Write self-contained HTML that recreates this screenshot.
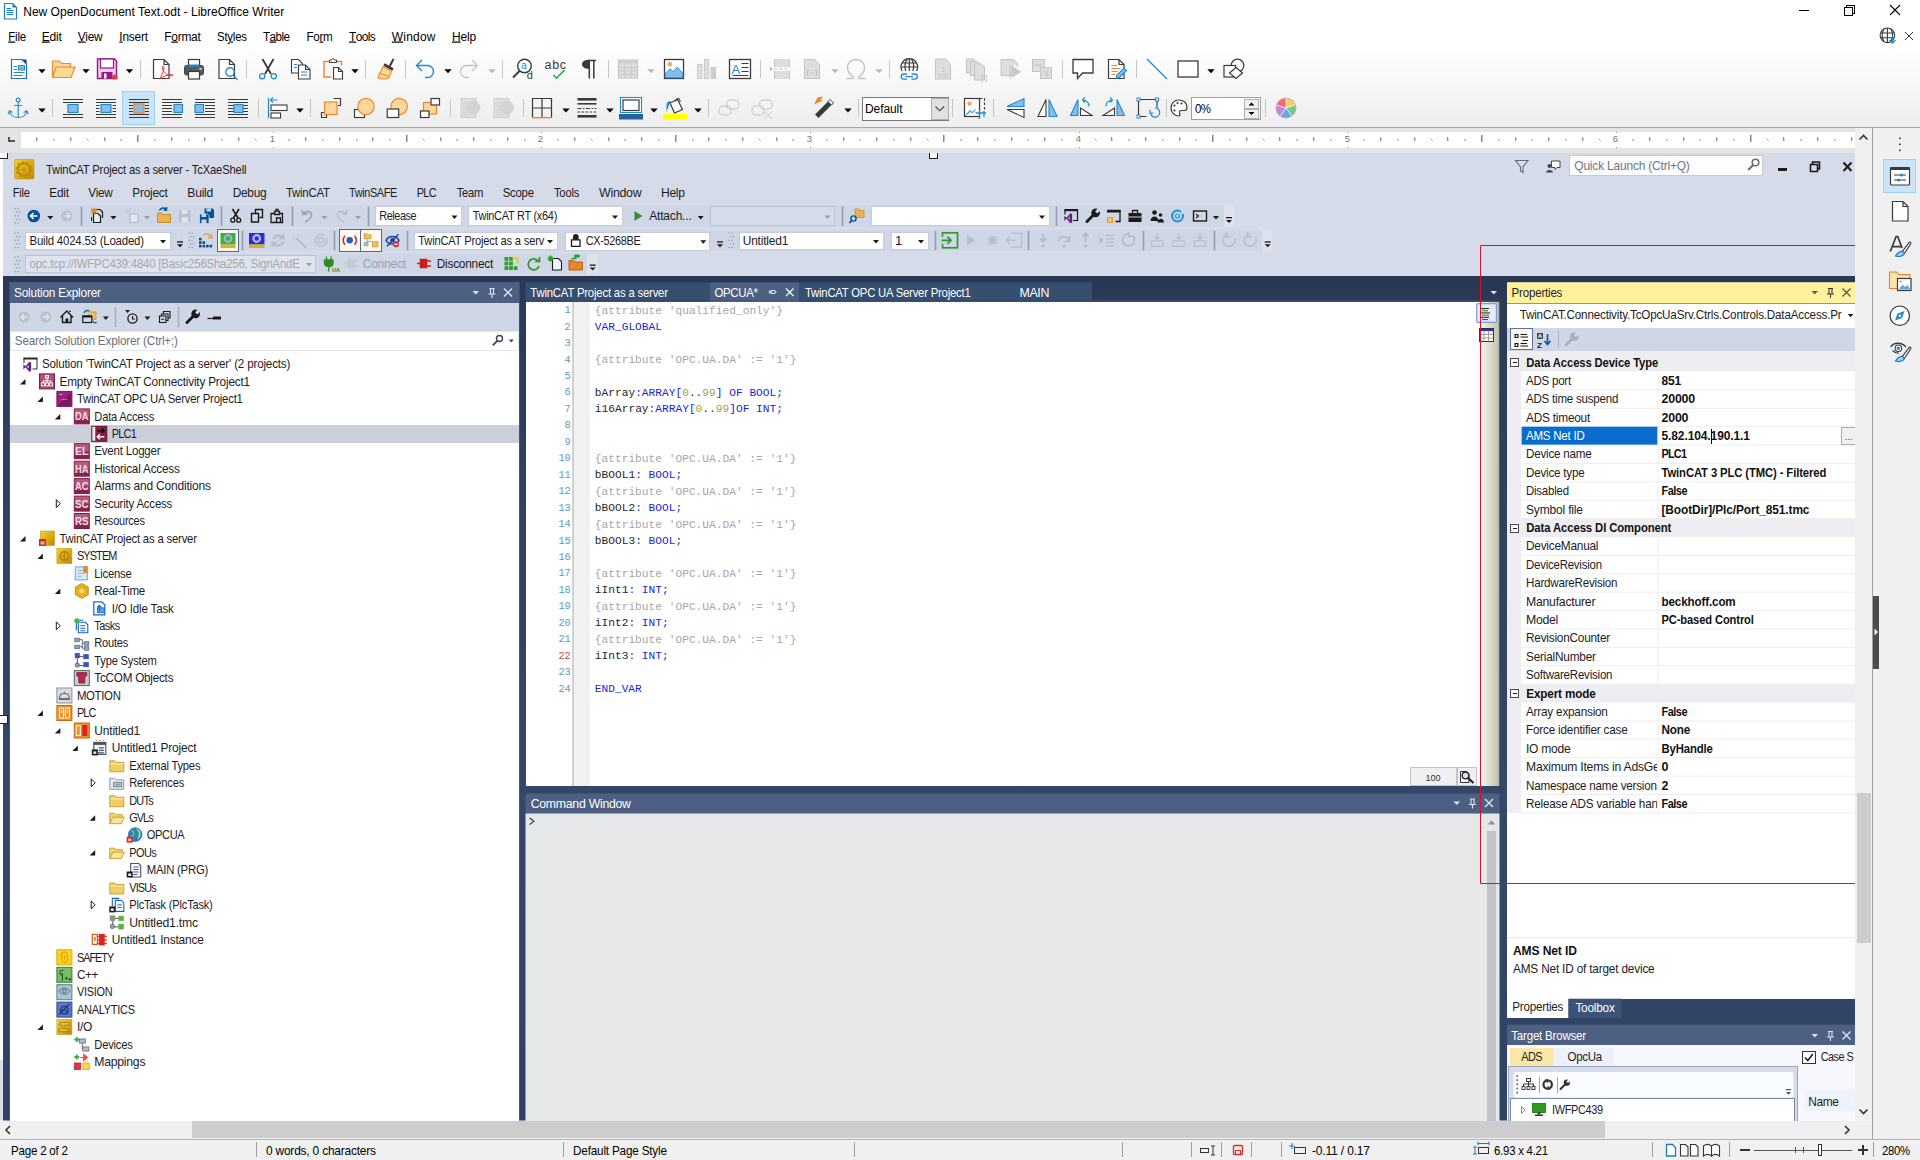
<!DOCTYPE html>
<html><head><meta charset="utf-8"><title>New OpenDocument Text.odt - LibreOffice Writer</title>
<style>html,body{margin:0;padding:0;background:#fff;overflow:hidden}body{width:1920px;height:1160px;font-family:"Liberation Sans",sans-serif}svg{display:block;font-family:"Liberation Sans",sans-serif}text{white-space:pre}.m{font-family:"Liberation Mono",monospace}</style></head>
<body>
<svg width="1920" height="1160" viewBox="0 0 1920 1160">
<rect x="0" y="0" width="1920" height="1160" fill="#ffffff" shape-rendering="crispEdges"/>
<defs><linearGradient id="tbg" x1="0" y1="0" x2="0" y2="1"><stop offset="0" stop-color="#ffffff"/><stop offset="0.2" stop-color="#ffffff"/><stop offset="1" stop-color="#eeeeee"/></linearGradient><linearGradient id="olive" x1="0" y1="0" x2="1" y2="0"><stop offset="0" stop-color="#ffffff"/><stop offset="0.35" stop-color="#e9eadf"/><stop offset="0.9" stop-color="#c6c9b2"/><stop offset="1" stop-color="#a9ad98"/></linearGradient></defs>
<rect x="0" y="24" width="1920" height="103" fill="url(#tbg)" shape-rendering="crispEdges"/>
<rect x="0" y="127" width="1920" height="1" fill="#a9a9a9" shape-rendering="crispEdges"/>
<rect x="0" y="128" width="1872" height="25" fill="#e4e4e4" shape-rendering="crispEdges"/>
<rect x="21" y="132" width="1841" height="16" fill="#ffffff" shape-rendering="crispEdges"/>
<rect x="0" y="153" width="1855" height="968" fill="#ffffff" shape-rendering="crispEdges"/>
<rect x="3" y="153" width="1852" height="968" fill="#d6dbe9" shape-rendering="crispEdges"/>
<rect x="0" y="1060" width="3" height="60" fill="#d9deea" shape-rendering="crispEdges"/>
<defs><linearGradient id="navy" gradientUnits="userSpaceOnUse" x1="0" y1="276" x2="0" y2="1120"><stop offset="0" stop-color="#293955"/><stop offset="0.28" stop-color="#304262"/><stop offset="0.62" stop-color="#344769"/><stop offset="1" stop-color="#314365"/></linearGradient></defs>
<rect x="3" y="276" width="1852" height="845" fill="url(#navy)" shape-rendering="crispEdges"/>
<path d="M4.5 3.5h8l4 4v11.5h-12z" fill="#ffffff" stroke="#1e7cc4" stroke-width="1.2" />
<path d="M12.5 3.5l4 4h-4z" fill="#1e7cc4" />
<line x1="6.5" y1="8.5" x2="11" y2="8.5" stroke="#1e7cc4" stroke-width="1" />
<line x1="6.5" y1="10.5" x2="13.5" y2="10.5" stroke="#1e7cc4" stroke-width="1" />
<line x1="6.5" y1="12.5" x2="13.5" y2="12.5" stroke="#1e7cc4" stroke-width="1" />
<line x1="6.5" y1="14.5" x2="13.5" y2="14.5" stroke="#1e7cc4" stroke-width="1" />
<text x="23.2" y="15.5" font-size="12" fill="#000" textLength="261" lengthAdjust="spacing">New OpenDocument Text.odt - LibreOffice Writer</text>
<line x1="1799" y1="10.5" x2="1809" y2="10.5" stroke="#000" stroke-width="1"  shape-rendering="crispEdges"/>
<path d="M1844.5 7.5h7.5v7.5h-7.5z M1846.5 7.5v-2h7.5v7.5h-2" fill="none" stroke="#000" stroke-width="1" shape-rendering="crispEdges"/>
<path d="M1890 5l10 10M1900 5l-10 10" fill="none" stroke="#000" stroke-width="1.1" />
<text transform="translate(8.2 40.5) scale(1 1.038)" font-size="11.56" fill="#000" textLength="18" lengthAdjust="spacing"><tspan text-decoration="underline">F</tspan>ile</text>
<text x="41.8" y="40.5" font-size="12" fill="#000" textLength="20" lengthAdjust="spacing"><tspan text-decoration="underline">E</tspan>dit</text>
<text transform="translate(77.8 40.5) scale(1 1.009)" font-size="11.89" fill="#000" textLength="24.7" lengthAdjust="spacing"><tspan text-decoration="underline">V</tspan>iew</text>
<text transform="translate(119.3 40.5) scale(1 1.01)" font-size="11.88" fill="#000" textLength="28.7" lengthAdjust="spacing"><tspan text-decoration="underline">I</tspan>nsert</text>
<text transform="translate(164.3 40.5) scale(1 1.006)" font-size="11.93" fill="#000" textLength="36.5" lengthAdjust="spacing">F<tspan text-decoration="underline">o</tspan>rmat</text>
<text transform="translate(217 40.5) scale(1 1.053)" font-size="11.4" fill="#000" textLength="30" lengthAdjust="spacing">St<tspan text-decoration="underline">y</tspan>les</text>
<text transform="translate(263 40.5) scale(1 1.027)" font-size="11.69" fill="#000" textLength="27" lengthAdjust="spacing">T<tspan text-decoration="underline">a</tspan>ble</text>
<text transform="translate(306.5 40.5) scale(1 1.033)" font-size="11.62" fill="#000" textLength="26.2" lengthAdjust="spacing">Fo<tspan text-decoration="underline">r</tspan>m</text>
<text transform="translate(349 40.5) scale(1 1.014)" font-size="11.84" fill="#000" textLength="26.7" lengthAdjust="spacing"><tspan text-decoration="underline">T</tspan>ools</text>
<text x="391.8" y="40.5" font-size="12" fill="#000" textLength="43.7" lengthAdjust="spacing"><tspan text-decoration="underline">W</tspan>indow</text>
<text x="452" y="40.5" font-size="12" fill="#000" textLength="24.2" lengthAdjust="spacing"><tspan text-decoration="underline">H</tspan>elp</text>
<g fill="none" stroke="#3a3a3a" stroke-width="1.1">
<circle cx="1887.4" cy="35.3" r="7.3" fill="none"/>
<path d="M1880.3 33h14.2M1880.3 37.7h14.2M1887.4 28v14.6M1884 28.8c-2.3 4-2.3 9 0 13M1890.8 28.8c2.3 4 2.3 9 0 13" fill="none" />
</g>
<path d="M1889.5 40l3 3 3-3M1892.5 36.5v6.3" fill="none" stroke="#1e8bcd" stroke-width="1.3" />
<path d="M1905 32l8 8M1913 32l-8 8" fill="none" stroke="#333" stroke-width="1" />
<path d="M9 136.5v4.8h6" fill="none" stroke="#555" stroke-width="2" shape-rendering="crispEdges"/>
<rect x="36" y="137" width="1" height="4" fill="#969696" shape-rendering="crispEdges"/>
<rect x="37" y="138" width="1" height="3" fill="#cfcfcf" shape-rendering="crispEdges"/>
<rect x="53" y="139" width="1" height="1" fill="#9a9a9a" shape-rendering="crispEdges"/>
<rect x="54" y="140" width="1" height="1" fill="#b5b5b5" shape-rendering="crispEdges"/>
<rect x="70" y="137" width="1" height="4" fill="#969696" shape-rendering="crispEdges"/>
<rect x="71" y="138" width="1" height="3" fill="#cfcfcf" shape-rendering="crispEdges"/>
<rect x="87" y="139" width="1" height="1" fill="#9a9a9a" shape-rendering="crispEdges"/>
<rect x="88" y="140" width="1" height="1" fill="#b5b5b5" shape-rendering="crispEdges"/>
<rect x="104" y="137" width="1" height="4" fill="#969696" shape-rendering="crispEdges"/>
<rect x="105" y="138" width="1" height="3" fill="#cfcfcf" shape-rendering="crispEdges"/>
<rect x="120" y="139" width="1" height="1" fill="#9a9a9a" shape-rendering="crispEdges"/>
<rect x="121" y="140" width="1" height="1" fill="#b5b5b5" shape-rendering="crispEdges"/>
<rect x="137" y="135" width="1" height="7" fill="#858585" shape-rendering="crispEdges"/>
<rect x="138" y="135" width="1" height="7" fill="#c4c4c4" shape-rendering="crispEdges"/>
<rect x="154" y="139" width="1" height="1" fill="#9a9a9a" shape-rendering="crispEdges"/>
<rect x="155" y="140" width="1" height="1" fill="#b5b5b5" shape-rendering="crispEdges"/>
<rect x="171" y="137" width="1" height="4" fill="#969696" shape-rendering="crispEdges"/>
<rect x="172" y="138" width="1" height="3" fill="#cfcfcf" shape-rendering="crispEdges"/>
<rect x="188" y="139" width="1" height="1" fill="#9a9a9a" shape-rendering="crispEdges"/>
<rect x="189" y="140" width="1" height="1" fill="#b5b5b5" shape-rendering="crispEdges"/>
<rect x="204" y="137" width="1" height="4" fill="#969696" shape-rendering="crispEdges"/>
<rect x="205" y="138" width="1" height="3" fill="#cfcfcf" shape-rendering="crispEdges"/>
<rect x="221" y="139" width="1" height="1" fill="#9a9a9a" shape-rendering="crispEdges"/>
<rect x="222" y="140" width="1" height="1" fill="#b5b5b5" shape-rendering="crispEdges"/>
<rect x="238" y="137" width="1" height="4" fill="#969696" shape-rendering="crispEdges"/>
<rect x="239" y="138" width="1" height="3" fill="#cfcfcf" shape-rendering="crispEdges"/>
<rect x="255" y="139" width="1" height="1" fill="#9a9a9a" shape-rendering="crispEdges"/>
<rect x="256" y="140" width="1" height="1" fill="#b5b5b5" shape-rendering="crispEdges"/>
<text x="272.5" y="142" font-size="9.5" fill="#7d7468" text-anchor="middle">1</text>
<rect x="273" y="132" width="1" height="1" fill="#999" shape-rendering="crispEdges"/>
<rect x="273" y="147" width="1" height="1" fill="#999" shape-rendering="crispEdges"/>
<rect x="288" y="139" width="1" height="1" fill="#9a9a9a" shape-rendering="crispEdges"/>
<rect x="289" y="140" width="1" height="1" fill="#b5b5b5" shape-rendering="crispEdges"/>
<rect x="305" y="137" width="1" height="4" fill="#969696" shape-rendering="crispEdges"/>
<rect x="306" y="138" width="1" height="3" fill="#cfcfcf" shape-rendering="crispEdges"/>
<rect x="322" y="139" width="1" height="1" fill="#9a9a9a" shape-rendering="crispEdges"/>
<rect x="323" y="140" width="1" height="1" fill="#b5b5b5" shape-rendering="crispEdges"/>
<rect x="339" y="137" width="1" height="4" fill="#969696" shape-rendering="crispEdges"/>
<rect x="340" y="138" width="1" height="3" fill="#cfcfcf" shape-rendering="crispEdges"/>
<rect x="356" y="139" width="1" height="1" fill="#9a9a9a" shape-rendering="crispEdges"/>
<rect x="357" y="140" width="1" height="1" fill="#b5b5b5" shape-rendering="crispEdges"/>
<rect x="372" y="137" width="1" height="4" fill="#969696" shape-rendering="crispEdges"/>
<rect x="373" y="138" width="1" height="3" fill="#cfcfcf" shape-rendering="crispEdges"/>
<rect x="389" y="139" width="1" height="1" fill="#9a9a9a" shape-rendering="crispEdges"/>
<rect x="390" y="140" width="1" height="1" fill="#b5b5b5" shape-rendering="crispEdges"/>
<rect x="406" y="135" width="1" height="7" fill="#858585" shape-rendering="crispEdges"/>
<rect x="407" y="135" width="1" height="7" fill="#c4c4c4" shape-rendering="crispEdges"/>
<rect x="423" y="139" width="1" height="1" fill="#9a9a9a" shape-rendering="crispEdges"/>
<rect x="424" y="140" width="1" height="1" fill="#b5b5b5" shape-rendering="crispEdges"/>
<rect x="440" y="137" width="1" height="4" fill="#969696" shape-rendering="crispEdges"/>
<rect x="441" y="138" width="1" height="3" fill="#cfcfcf" shape-rendering="crispEdges"/>
<rect x="456" y="139" width="1" height="1" fill="#9a9a9a" shape-rendering="crispEdges"/>
<rect x="457" y="140" width="1" height="1" fill="#b5b5b5" shape-rendering="crispEdges"/>
<rect x="473" y="137" width="1" height="4" fill="#969696" shape-rendering="crispEdges"/>
<rect x="474" y="138" width="1" height="3" fill="#cfcfcf" shape-rendering="crispEdges"/>
<rect x="490" y="139" width="1" height="1" fill="#9a9a9a" shape-rendering="crispEdges"/>
<rect x="491" y="140" width="1" height="1" fill="#b5b5b5" shape-rendering="crispEdges"/>
<rect x="507" y="137" width="1" height="4" fill="#969696" shape-rendering="crispEdges"/>
<rect x="508" y="138" width="1" height="3" fill="#cfcfcf" shape-rendering="crispEdges"/>
<rect x="524" y="139" width="1" height="1" fill="#9a9a9a" shape-rendering="crispEdges"/>
<rect x="525" y="140" width="1" height="1" fill="#b5b5b5" shape-rendering="crispEdges"/>
<text x="540.5" y="142" font-size="9.5" fill="#7d7468" text-anchor="middle">2</text>
<rect x="541" y="132" width="1" height="1" fill="#999" shape-rendering="crispEdges"/>
<rect x="541" y="147" width="1" height="1" fill="#999" shape-rendering="crispEdges"/>
<rect x="557" y="139" width="1" height="1" fill="#9a9a9a" shape-rendering="crispEdges"/>
<rect x="558" y="140" width="1" height="1" fill="#b5b5b5" shape-rendering="crispEdges"/>
<rect x="574" y="137" width="1" height="4" fill="#969696" shape-rendering="crispEdges"/>
<rect x="575" y="138" width="1" height="3" fill="#cfcfcf" shape-rendering="crispEdges"/>
<rect x="591" y="139" width="1" height="1" fill="#9a9a9a" shape-rendering="crispEdges"/>
<rect x="592" y="140" width="1" height="1" fill="#b5b5b5" shape-rendering="crispEdges"/>
<rect x="608" y="137" width="1" height="4" fill="#969696" shape-rendering="crispEdges"/>
<rect x="609" y="138" width="1" height="3" fill="#cfcfcf" shape-rendering="crispEdges"/>
<rect x="624" y="139" width="1" height="1" fill="#9a9a9a" shape-rendering="crispEdges"/>
<rect x="625" y="140" width="1" height="1" fill="#b5b5b5" shape-rendering="crispEdges"/>
<rect x="641" y="137" width="1" height="4" fill="#969696" shape-rendering="crispEdges"/>
<rect x="642" y="138" width="1" height="3" fill="#cfcfcf" shape-rendering="crispEdges"/>
<rect x="658" y="139" width="1" height="1" fill="#9a9a9a" shape-rendering="crispEdges"/>
<rect x="659" y="140" width="1" height="1" fill="#b5b5b5" shape-rendering="crispEdges"/>
<rect x="675" y="135" width="1" height="7" fill="#858585" shape-rendering="crispEdges"/>
<rect x="676" y="135" width="1" height="7" fill="#c4c4c4" shape-rendering="crispEdges"/>
<rect x="692" y="139" width="1" height="1" fill="#9a9a9a" shape-rendering="crispEdges"/>
<rect x="693" y="140" width="1" height="1" fill="#b5b5b5" shape-rendering="crispEdges"/>
<rect x="708" y="137" width="1" height="4" fill="#969696" shape-rendering="crispEdges"/>
<rect x="709" y="138" width="1" height="3" fill="#cfcfcf" shape-rendering="crispEdges"/>
<rect x="725" y="139" width="1" height="1" fill="#9a9a9a" shape-rendering="crispEdges"/>
<rect x="726" y="140" width="1" height="1" fill="#b5b5b5" shape-rendering="crispEdges"/>
<rect x="742" y="137" width="1" height="4" fill="#969696" shape-rendering="crispEdges"/>
<rect x="743" y="138" width="1" height="3" fill="#cfcfcf" shape-rendering="crispEdges"/>
<rect x="759" y="139" width="1" height="1" fill="#9a9a9a" shape-rendering="crispEdges"/>
<rect x="760" y="140" width="1" height="1" fill="#b5b5b5" shape-rendering="crispEdges"/>
<rect x="776" y="137" width="1" height="4" fill="#969696" shape-rendering="crispEdges"/>
<rect x="777" y="138" width="1" height="3" fill="#cfcfcf" shape-rendering="crispEdges"/>
<rect x="792" y="139" width="1" height="1" fill="#9a9a9a" shape-rendering="crispEdges"/>
<rect x="793" y="140" width="1" height="1" fill="#b5b5b5" shape-rendering="crispEdges"/>
<text x="809.5" y="142" font-size="9.5" fill="#7d7468" text-anchor="middle">3</text>
<rect x="810" y="132" width="1" height="1" fill="#999" shape-rendering="crispEdges"/>
<rect x="810" y="147" width="1" height="1" fill="#999" shape-rendering="crispEdges"/>
<rect x="826" y="139" width="1" height="1" fill="#9a9a9a" shape-rendering="crispEdges"/>
<rect x="827" y="140" width="1" height="1" fill="#b5b5b5" shape-rendering="crispEdges"/>
<rect x="843" y="137" width="1" height="4" fill="#969696" shape-rendering="crispEdges"/>
<rect x="844" y="138" width="1" height="3" fill="#cfcfcf" shape-rendering="crispEdges"/>
<rect x="859" y="139" width="1" height="1" fill="#9a9a9a" shape-rendering="crispEdges"/>
<rect x="860" y="140" width="1" height="1" fill="#b5b5b5" shape-rendering="crispEdges"/>
<rect x="876" y="137" width="1" height="4" fill="#969696" shape-rendering="crispEdges"/>
<rect x="877" y="138" width="1" height="3" fill="#cfcfcf" shape-rendering="crispEdges"/>
<rect x="893" y="139" width="1" height="1" fill="#9a9a9a" shape-rendering="crispEdges"/>
<rect x="894" y="140" width="1" height="1" fill="#b5b5b5" shape-rendering="crispEdges"/>
<rect x="910" y="137" width="1" height="4" fill="#969696" shape-rendering="crispEdges"/>
<rect x="911" y="138" width="1" height="3" fill="#cfcfcf" shape-rendering="crispEdges"/>
<rect x="927" y="139" width="1" height="1" fill="#9a9a9a" shape-rendering="crispEdges"/>
<rect x="928" y="140" width="1" height="1" fill="#b5b5b5" shape-rendering="crispEdges"/>
<rect x="943" y="135" width="1" height="7" fill="#858585" shape-rendering="crispEdges"/>
<rect x="944" y="135" width="1" height="7" fill="#c4c4c4" shape-rendering="crispEdges"/>
<rect x="960" y="139" width="1" height="1" fill="#9a9a9a" shape-rendering="crispEdges"/>
<rect x="961" y="140" width="1" height="1" fill="#b5b5b5" shape-rendering="crispEdges"/>
<rect x="977" y="137" width="1" height="4" fill="#969696" shape-rendering="crispEdges"/>
<rect x="978" y="138" width="1" height="3" fill="#cfcfcf" shape-rendering="crispEdges"/>
<rect x="994" y="139" width="1" height="1" fill="#9a9a9a" shape-rendering="crispEdges"/>
<rect x="995" y="140" width="1" height="1" fill="#b5b5b5" shape-rendering="crispEdges"/>
<rect x="1011" y="137" width="1" height="4" fill="#969696" shape-rendering="crispEdges"/>
<rect x="1012" y="138" width="1" height="3" fill="#cfcfcf" shape-rendering="crispEdges"/>
<rect x="1027" y="139" width="1" height="1" fill="#9a9a9a" shape-rendering="crispEdges"/>
<rect x="1028" y="140" width="1" height="1" fill="#b5b5b5" shape-rendering="crispEdges"/>
<rect x="1044" y="137" width="1" height="4" fill="#969696" shape-rendering="crispEdges"/>
<rect x="1045" y="138" width="1" height="3" fill="#cfcfcf" shape-rendering="crispEdges"/>
<rect x="1061" y="139" width="1" height="1" fill="#9a9a9a" shape-rendering="crispEdges"/>
<rect x="1062" y="140" width="1" height="1" fill="#b5b5b5" shape-rendering="crispEdges"/>
<text x="1078.5" y="142" font-size="9.5" fill="#7d7468" text-anchor="middle">4</text>
<rect x="1079" y="132" width="1" height="1" fill="#999" shape-rendering="crispEdges"/>
<rect x="1079" y="147" width="1" height="1" fill="#999" shape-rendering="crispEdges"/>
<rect x="1095" y="139" width="1" height="1" fill="#9a9a9a" shape-rendering="crispEdges"/>
<rect x="1096" y="140" width="1" height="1" fill="#b5b5b5" shape-rendering="crispEdges"/>
<rect x="1111" y="137" width="1" height="4" fill="#969696" shape-rendering="crispEdges"/>
<rect x="1112" y="138" width="1" height="3" fill="#cfcfcf" shape-rendering="crispEdges"/>
<rect x="1128" y="139" width="1" height="1" fill="#9a9a9a" shape-rendering="crispEdges"/>
<rect x="1129" y="140" width="1" height="1" fill="#b5b5b5" shape-rendering="crispEdges"/>
<rect x="1145" y="137" width="1" height="4" fill="#969696" shape-rendering="crispEdges"/>
<rect x="1146" y="138" width="1" height="3" fill="#cfcfcf" shape-rendering="crispEdges"/>
<rect x="1162" y="139" width="1" height="1" fill="#9a9a9a" shape-rendering="crispEdges"/>
<rect x="1163" y="140" width="1" height="1" fill="#b5b5b5" shape-rendering="crispEdges"/>
<rect x="1179" y="137" width="1" height="4" fill="#969696" shape-rendering="crispEdges"/>
<rect x="1180" y="138" width="1" height="3" fill="#cfcfcf" shape-rendering="crispEdges"/>
<rect x="1195" y="139" width="1" height="1" fill="#9a9a9a" shape-rendering="crispEdges"/>
<rect x="1196" y="140" width="1" height="1" fill="#b5b5b5" shape-rendering="crispEdges"/>
<rect x="1212" y="135" width="1" height="7" fill="#858585" shape-rendering="crispEdges"/>
<rect x="1213" y="135" width="1" height="7" fill="#c4c4c4" shape-rendering="crispEdges"/>
<rect x="1229" y="139" width="1" height="1" fill="#9a9a9a" shape-rendering="crispEdges"/>
<rect x="1230" y="140" width="1" height="1" fill="#b5b5b5" shape-rendering="crispEdges"/>
<rect x="1246" y="137" width="1" height="4" fill="#969696" shape-rendering="crispEdges"/>
<rect x="1247" y="138" width="1" height="3" fill="#cfcfcf" shape-rendering="crispEdges"/>
<rect x="1263" y="139" width="1" height="1" fill="#9a9a9a" shape-rendering="crispEdges"/>
<rect x="1264" y="140" width="1" height="1" fill="#b5b5b5" shape-rendering="crispEdges"/>
<rect x="1279" y="137" width="1" height="4" fill="#969696" shape-rendering="crispEdges"/>
<rect x="1280" y="138" width="1" height="3" fill="#cfcfcf" shape-rendering="crispEdges"/>
<rect x="1296" y="139" width="1" height="1" fill="#9a9a9a" shape-rendering="crispEdges"/>
<rect x="1297" y="140" width="1" height="1" fill="#b5b5b5" shape-rendering="crispEdges"/>
<rect x="1313" y="137" width="1" height="4" fill="#969696" shape-rendering="crispEdges"/>
<rect x="1314" y="138" width="1" height="3" fill="#cfcfcf" shape-rendering="crispEdges"/>
<rect x="1330" y="139" width="1" height="1" fill="#9a9a9a" shape-rendering="crispEdges"/>
<rect x="1331" y="140" width="1" height="1" fill="#b5b5b5" shape-rendering="crispEdges"/>
<text x="1347.5" y="142" font-size="9.5" fill="#7d7468" text-anchor="middle">5</text>
<rect x="1348" y="132" width="1" height="1" fill="#999" shape-rendering="crispEdges"/>
<rect x="1348" y="147" width="1" height="1" fill="#999" shape-rendering="crispEdges"/>
<rect x="1363" y="139" width="1" height="1" fill="#9a9a9a" shape-rendering="crispEdges"/>
<rect x="1364" y="140" width="1" height="1" fill="#b5b5b5" shape-rendering="crispEdges"/>
<rect x="1380" y="137" width="1" height="4" fill="#969696" shape-rendering="crispEdges"/>
<rect x="1381" y="138" width="1" height="3" fill="#cfcfcf" shape-rendering="crispEdges"/>
<rect x="1397" y="139" width="1" height="1" fill="#9a9a9a" shape-rendering="crispEdges"/>
<rect x="1398" y="140" width="1" height="1" fill="#b5b5b5" shape-rendering="crispEdges"/>
<rect x="1414" y="137" width="1" height="4" fill="#969696" shape-rendering="crispEdges"/>
<rect x="1415" y="138" width="1" height="3" fill="#cfcfcf" shape-rendering="crispEdges"/>
<rect x="1431" y="139" width="1" height="1" fill="#9a9a9a" shape-rendering="crispEdges"/>
<rect x="1432" y="140" width="1" height="1" fill="#b5b5b5" shape-rendering="crispEdges"/>
<rect x="1447" y="137" width="1" height="4" fill="#969696" shape-rendering="crispEdges"/>
<rect x="1448" y="138" width="1" height="3" fill="#cfcfcf" shape-rendering="crispEdges"/>
<rect x="1464" y="139" width="1" height="1" fill="#9a9a9a" shape-rendering="crispEdges"/>
<rect x="1465" y="140" width="1" height="1" fill="#b5b5b5" shape-rendering="crispEdges"/>
<rect x="1481" y="135" width="1" height="7" fill="#858585" shape-rendering="crispEdges"/>
<rect x="1482" y="135" width="1" height="7" fill="#c4c4c4" shape-rendering="crispEdges"/>
<rect x="1498" y="139" width="1" height="1" fill="#9a9a9a" shape-rendering="crispEdges"/>
<rect x="1499" y="140" width="1" height="1" fill="#b5b5b5" shape-rendering="crispEdges"/>
<rect x="1515" y="137" width="1" height="4" fill="#969696" shape-rendering="crispEdges"/>
<rect x="1516" y="138" width="1" height="3" fill="#cfcfcf" shape-rendering="crispEdges"/>
<rect x="1531" y="139" width="1" height="1" fill="#9a9a9a" shape-rendering="crispEdges"/>
<rect x="1532" y="140" width="1" height="1" fill="#b5b5b5" shape-rendering="crispEdges"/>
<rect x="1548" y="137" width="1" height="4" fill="#969696" shape-rendering="crispEdges"/>
<rect x="1549" y="138" width="1" height="3" fill="#cfcfcf" shape-rendering="crispEdges"/>
<rect x="1565" y="139" width="1" height="1" fill="#9a9a9a" shape-rendering="crispEdges"/>
<rect x="1566" y="140" width="1" height="1" fill="#b5b5b5" shape-rendering="crispEdges"/>
<rect x="1582" y="137" width="1" height="4" fill="#969696" shape-rendering="crispEdges"/>
<rect x="1583" y="138" width="1" height="3" fill="#cfcfcf" shape-rendering="crispEdges"/>
<rect x="1599" y="139" width="1" height="1" fill="#9a9a9a" shape-rendering="crispEdges"/>
<rect x="1600" y="140" width="1" height="1" fill="#b5b5b5" shape-rendering="crispEdges"/>
<text x="1615.5" y="142" font-size="9.5" fill="#7d7468" text-anchor="middle">6</text>
<rect x="1616" y="132" width="1" height="1" fill="#999" shape-rendering="crispEdges"/>
<rect x="1616" y="147" width="1" height="1" fill="#999" shape-rendering="crispEdges"/>
<rect x="1632" y="139" width="1" height="1" fill="#9a9a9a" shape-rendering="crispEdges"/>
<rect x="1633" y="140" width="1" height="1" fill="#b5b5b5" shape-rendering="crispEdges"/>
<rect x="1649" y="137" width="1" height="4" fill="#969696" shape-rendering="crispEdges"/>
<rect x="1650" y="138" width="1" height="3" fill="#cfcfcf" shape-rendering="crispEdges"/>
<rect x="1666" y="139" width="1" height="1" fill="#9a9a9a" shape-rendering="crispEdges"/>
<rect x="1667" y="140" width="1" height="1" fill="#b5b5b5" shape-rendering="crispEdges"/>
<rect x="1683" y="137" width="1" height="4" fill="#969696" shape-rendering="crispEdges"/>
<rect x="1684" y="138" width="1" height="3" fill="#cfcfcf" shape-rendering="crispEdges"/>
<rect x="1699" y="139" width="1" height="1" fill="#9a9a9a" shape-rendering="crispEdges"/>
<rect x="1700" y="140" width="1" height="1" fill="#b5b5b5" shape-rendering="crispEdges"/>
<rect x="1716" y="137" width="1" height="4" fill="#969696" shape-rendering="crispEdges"/>
<rect x="1717" y="138" width="1" height="3" fill="#cfcfcf" shape-rendering="crispEdges"/>
<rect x="1733" y="139" width="1" height="1" fill="#9a9a9a" shape-rendering="crispEdges"/>
<rect x="1734" y="140" width="1" height="1" fill="#b5b5b5" shape-rendering="crispEdges"/>
<rect x="1750" y="135" width="1" height="7" fill="#858585" shape-rendering="crispEdges"/>
<rect x="1751" y="135" width="1" height="7" fill="#c4c4c4" shape-rendering="crispEdges"/>
<rect x="1767" y="139" width="1" height="1" fill="#9a9a9a" shape-rendering="crispEdges"/>
<rect x="1768" y="140" width="1" height="1" fill="#b5b5b5" shape-rendering="crispEdges"/>
<rect x="1783" y="137" width="1" height="4" fill="#969696" shape-rendering="crispEdges"/>
<rect x="1784" y="138" width="1" height="3" fill="#cfcfcf" shape-rendering="crispEdges"/>
<rect x="1800" y="139" width="1" height="1" fill="#9a9a9a" shape-rendering="crispEdges"/>
<rect x="1801" y="140" width="1" height="1" fill="#b5b5b5" shape-rendering="crispEdges"/>
<rect x="1817" y="137" width="1" height="4" fill="#969696" shape-rendering="crispEdges"/>
<rect x="1818" y="138" width="1" height="3" fill="#cfcfcf" shape-rendering="crispEdges"/>
<rect x="1834" y="139" width="1" height="1" fill="#9a9a9a" shape-rendering="crispEdges"/>
<rect x="1835" y="140" width="1" height="1" fill="#b5b5b5" shape-rendering="crispEdges"/>
<rect x="1851" y="137" width="1" height="4" fill="#969696" shape-rendering="crispEdges"/>
<rect x="1852" y="138" width="1" height="3" fill="#cfcfcf" shape-rendering="crispEdges"/>
<rect x="1855" y="128" width="17" height="992" fill="#f0f0f0" shape-rendering="crispEdges"/>
<path d="M1859.5 139.5l4-4 4 4" fill="none" stroke="#333" stroke-width="1.6" />
<path d="M1859.5 1109.5l4 4 4-4" fill="none" stroke="#333" stroke-width="1.6" />
<rect x="1857" y="793" width="14" height="150" fill="#cdcdcd" shape-rendering="crispEdges"/>
<rect x="1872" y="128" width="48" height="1012" fill="#f0f0f0" shape-rendering="crispEdges"/>
<rect x="1872" y="128" width="1" height="1012" fill="#a0a0a0" shape-rendering="crispEdges"/>
<rect x="1873" y="596" width="6" height="73" fill="#4c4c4c" shape-rendering="crispEdges"/>
<path d="M1874.5 628.5l3.5 3.5-3.5 3.5z" fill="#fff" />
<rect x="1899" y="137.5" width="1.6" height="1.6" fill="#333"/>
<rect x="1899" y="143.5" width="1.6" height="1.6" fill="#333"/>
<rect x="1899" y="149.5" width="1.6" height="1.6" fill="#333"/>
<rect x="1883.5" y="159.5" width="32" height="33" fill="#cce4f7" stroke="#99d1ff" stroke-width="1" shape-rendering="crispEdges"/>
<rect x="1890.5" y="167.5" width="19" height="17.5" fill="#fff" stroke="#3a3a3a" stroke-width="1.2" rx="1"/>
<rect x="1890.5" y="167" width="19" height="3" fill="#3a3a3a"/>
<path d="M1894 175h12M1894 180h12" fill="none" stroke="#3a3a3a" stroke-width="1" />
<circle cx="1901.5" cy="175" r="1.6" fill="#1e8bcd"/>
<circle cx="1898.5" cy="180" r="1.6" fill="#1e8bcd"/>
<path d="M1892.5 201.5h10.5l5 5v14.5h-15.5z M1903 201.5v5h5" fill="#fff" stroke="#3a3a3a" stroke-width="1.2" />
<path d="M1890.300 251.500l5.800-15h1.600l4.300 11.500M1893 246.700h8.800" fill="none" stroke="#3a3a3a" stroke-width="1.7" />
<path d="M1909.300 242.3c1.500-0.500 2 0.700 1.300 1.800l-6.300 9.400-2.300-1.700z" fill="#fff" stroke="#3a3a3a" stroke-width="1.1" />
<path d="M1901.600 251.3c1.500 0.300 2.600 1.300 2.600 2.700-1 2.200-5 3-8.800 2 1.800-2.500 3.500-4.500 6.200-4.700z" fill="#9ccbf0" stroke="#1470c0" stroke-width="1.1" />
<path d="M1889.5 288.5v-16.5h7l2 2.5h11.5l-3 14z" fill="#fbe3b0" stroke="#e8812b" stroke-width="1.1" />
<rect x="1897.5" y="278.5" width="13.5" height="12" fill="#fff" stroke="#3a3a3a" stroke-width="1.2"/>
<path d="M1898.5 289.5l4-5 2.5 2.5 2.5-2 3 4.5z" fill="#5fa8e3" />
<circle cx="1900.7" cy="281.5" r="1" fill="#e8812b"/>
<circle cx="1899.8" cy="315.7" r="9.7" fill="#fff" stroke="#3a3a3a" stroke-width="1.2"/>
<path d="M1904.5 311l-2.5 7-7 2.5 2.5-7z" fill="#1e8bcd" />
<circle cx="1899.8" cy="315.7" r="1.2" fill="#fff"/>
<path d="M1890.500 347c3.500-5 11.500-5 15.500 0" fill="none" stroke="#3a3a3a" stroke-width="1.3" />
<path d="M1892.500 350.500c2 2 4 3 6.500 2.800" fill="none" stroke="#3a3a3a" stroke-width="1.1" />
<circle cx="1898.4" cy="348.3" r="3.3" fill="#fff" stroke="#3a3a3a" stroke-width="1.1"/>
<circle cx="1898.4" cy="348.3" r="1.7" fill="#1e8bcd"/>
<path d="M1909.300 347.3c1.500-0.500 2 0.700 1.300 1.800l-6.300 9.400-2.300-1.700z" fill="#fff" stroke="#3a3a3a" stroke-width="1.1" />
<path d="M1901.600 356.3c1.500 0.300 2.600 1.300 2.600 2.700-1 2.200-5 3-8.800 2 1.800-2.500 3.500-4.500 6.200-4.700z" fill="#9ccbf0" stroke="#1470c0" stroke-width="1.1" />
<rect x="0" y="1120.5" width="1872" height="19.5" fill="#f0f0f0"/>
<rect x="192" y="1121" width="1413" height="17" fill="#cdcdcd" shape-rendering="crispEdges"/>
<path d="M10 1126l-4 4 4 4" fill="none" stroke="#333" stroke-width="1.6" />
<path d="M1845 1126l4 4-4 4" fill="none" stroke="#333" stroke-width="1.6" />
<rect x="0" y="1139" width="1920" height="21" fill="#f0f0f0" shape-rendering="crispEdges"/>
<rect x="0" y="1139" width="1920" height="1" fill="#b4b4b4" shape-rendering="crispEdges"/>
<rect x="256" y="1142" width="1" height="15" fill="#a0a0a0" shape-rendering="crispEdges"/>
<rect x="563" y="1142" width="1" height="15" fill="#a0a0a0" shape-rendering="crispEdges"/>
<rect x="854" y="1142" width="1" height="15" fill="#a0a0a0" shape-rendering="crispEdges"/>
<rect x="1122" y="1142" width="1" height="15" fill="#a0a0a0" shape-rendering="crispEdges"/>
<rect x="1191" y="1142" width="1" height="15" fill="#a0a0a0" shape-rendering="crispEdges"/>
<rect x="1221" y="1142" width="1" height="15" fill="#a0a0a0" shape-rendering="crispEdges"/>
<rect x="1251" y="1142" width="1" height="15" fill="#a0a0a0" shape-rendering="crispEdges"/>
<rect x="1281" y="1142" width="1" height="15" fill="#a0a0a0" shape-rendering="crispEdges"/>
<rect x="1652" y="1142" width="1" height="15" fill="#a0a0a0" shape-rendering="crispEdges"/>
<rect x="1729" y="1142" width="1" height="15" fill="#a0a0a0" shape-rendering="crispEdges"/>
<rect x="1873" y="1142" width="1" height="15" fill="#a0a0a0" shape-rendering="crispEdges"/>
<text transform="translate(11 1155) scale(1 1.041)" font-size="11.53" fill="#000" textLength="57" lengthAdjust="spacing">Page 2 of 2</text>
<text transform="translate(266 1155) scale(1 1.008)" font-size="11.91" fill="#000" textLength="110" lengthAdjust="spacing">0 words, 0 characters</text>
<text transform="translate(573 1155) scale(1 1.021)" font-size="11.75" fill="#000" textLength="94" lengthAdjust="spacing">Default Page Style</text>
<text x="1312" y="1155" font-size="12" fill="#000" textLength="58" lengthAdjust="spacing">-0.11 / 0.17</text>
<text transform="translate(1494 1155) scale(1 1.062)" font-size="11.3" fill="#000" textLength="54" lengthAdjust="spacing">6.93 x 4.21</text>
<text transform="translate(1882 1155) scale(1 1.059)" font-size="11.33" fill="#000" textLength="28" lengthAdjust="spacing">280%</text>
<rect x="1200.5" y="1148.5" width="8" height="4" fill="none" stroke="#333" stroke-width="1"/>
<path d="M1211 1146h4M1213 1146v9M1211 1155h4" fill="none" stroke="#333" stroke-width="1" />
<rect x="1233.5" y="1145.5" width="9" height="9" fill="none" stroke="#d62d2d" stroke-width="1.4" rx="1"/>
<rect x="1235.5" y="1150.5" width="5" height="4" fill="none" stroke="#d62d2d" stroke-width="1"/>
<rect x="1294.5" y="1147.5" width="11" height="6" fill="none" stroke="#333" stroke-width="1"/>
<path d="M1292 1143v6M1289 1146h6" fill="none" stroke="#1e7cc4" stroke-width="1" />
<rect x="1478.5" y="1147.5" width="10" height="6" fill="none" stroke="#333" stroke-width="1"/>
<path d="M1478 1143.5h11M1478 1141.5v4M1489 1141.5v4" fill="none" stroke="#1e7cc4" stroke-width="1" />
<path d="M1475 1147v7M1473 1147h4M1473 1154h4" fill="none" stroke="#1e7cc4" stroke-width="1" />
<path d="M1666.5 1144.5h6l3 3v8.5h-9z" fill="#fff" stroke="#1e7cc4" stroke-width="1.3" />
<path d="M1680.5 1144.5h5l2.5 2.5v9h-7.5z M1690.5 1144.5h5l2.5 2.5v9h-7.5z" fill="#fff" stroke="#333" stroke-width="1.1" />
<path d="M1711.5 1146c-2.5-2-5.5-2-8 0v10c2.5-2 5.5-2 8 0zM1711.5 1146c2.5-2 5.5-2 8 0v10c-2.5-2-5.5-2-8 0" fill="#fff" stroke="#333" stroke-width="1.1" />
<rect x="1740" y="1149" width="10" height="2" fill="#333" shape-rendering="crispEdges"/>
<rect x="1754" y="1150" width="98" height="1" fill="#555" shape-rendering="crispEdges"/>
<rect x="1795" y="1147" width="1" height="6" fill="#555" shape-rendering="crispEdges"/>
<rect x="1803" y="1147" width="1" height="6" fill="#555" shape-rendering="crispEdges"/>
<rect x="1818.5" y="1144.5" width="3" height="11" fill="#fff" stroke="#333" stroke-width="1"/>
<rect x="1858" y="1149" width="10" height="2" fill="#333" shape-rendering="crispEdges"/>
<rect x="1862" y="1145" width="2" height="10" fill="#333" shape-rendering="crispEdges"/>
<g transform="translate(19,69)">
<path d="M-7.500 -9.500h10.500l4.500 4.500v14.500h-15z" fill="#fff" stroke="#1a72c2" stroke-width="1.2" />
<path d="M3 -9.500h4.500v4.500z" fill="#1d3b6e" />
<rect x="-0.5" y="-3.5" width="6" height="4.5" fill="#83beec" stroke="#1e8bcd" stroke-width="1"/>
<rect x="1.5" y="-2" width="2.5" height="1.5" fill="#ed8733"/>
<path d="M-5.5 -2.5h3.5M-5.5 0.5h3.5M-5.5 3.5h11M-5.5 6.5h9" fill="none" stroke="#1e8bcd" stroke-width="1" />
</g>
<path d="M38.3 69.3h7.4l-3.7 4z" fill="#000" />
<g transform="translate(63.5,69)">
<path d="M-11 8.5v-16.5h7l2 2.5h9v4" fill="#fbd79a" stroke="#ed8733" stroke-width="1.2" />
<path d="M-11 8.5l3.5-10.5h19l-4 10.5z" fill="#f8db8f" stroke="#ed8733" stroke-width="1.2" />
</g>
<path d="M82.3 69.3h7.4l-3.7 4z" fill="#000" />
<g transform="translate(107,69)">
<path d="M-9.5 -10h17l2 2v17.5h-19z" fill="#f3c8ea" stroke="#951b81" stroke-width="1.4" />
<rect x="-6.5" y="-10" width="13" height="9" fill="#fff" stroke="#951b81" stroke-width="1.2"/>
<rect x="-5.5" y="3" width="11" height="6.5" fill="#951b81"/>
<rect x="-3" y="4.5" width="2.5" height="5" fill="#fff"/>
<circle cx="8" cy="8" r="2.6" fill="#e8393c"/>
</g>
<path d="M125.8 69.3h7.4l-3.7 4z" fill="#000" />
<rect x="140" y="60" width="1" height="18" fill="#c6c6c6" shape-rendering="crispEdges"/>
<g transform="translate(162.5,69)">
<path d="M-9 -9.5h10.5l5 5v14h-15.5z M1.5 -9.5v5h5" fill="#fff" stroke="#3a3a3a" stroke-width="1.2" />
<path d="M-3 10c2-3 4.5-8 4.5-11.5 0-2-1.7-2-1.7 0 0 4 5 8 9.5 8.5 1.5 0 1.5-1.5 0-1.5-4 0-9 2-12.3 4.5z" fill="none" stroke="#e0393c" stroke-width="1" />
</g>
<g transform="translate(194,69)">
<rect x="-5.5" y="-9.5" width="11" height="6.5" fill="#fff" stroke="#3a3a3a" stroke-width="1.2"/>
<rect x="-9.5" y="-3.5" width="19" height="9.5" fill="#5a5a5a" stroke="#454545" stroke-width="1" rx="2"/>
<rect x="-5.5" y="-4.5" width="11" height="2.2" fill="#1e8bcd"/>
<rect x="-5.5" y="2.5" width="11" height="7.5" fill="#fff" stroke="#3a3a3a" stroke-width="1.2"/>
<rect x="5.5" y="-0.8" width="2.2" height="1.4" fill="#fff"/>
</g>
<g transform="translate(228,69)">
<path d="M-9 -9.5h10.5l5 5v14h-15.5z M1.5 -9.5v5h5" fill="#fff" stroke="#3a3a3a" stroke-width="1.2" />
<circle cx="2" cy="3" r="4.2" fill="#fff" stroke="#1e8bcd" stroke-width="1.4"/>
<path d="M5 6.2l4.5 4.5" fill="none" stroke="#1e8bcd" stroke-width="1.5" />
</g>
<rect x="246" y="60" width="1" height="18" fill="#c6c6c6" shape-rendering="crispEdges"/>
<g transform="translate(268,69)">
<path d="M-5.5 -10l8.5 15M5.5 -10l-8.5 15" fill="none" stroke="#3a3a3a" stroke-width="1.8" />
<circle cx="-5.8" cy="7.2" r="2.6" fill="#fff" stroke="#1e8bcd" stroke-width="1.3"/>
<circle cx="5.8" cy="7.2" r="2.6" fill="#fff" stroke="#1e8bcd" stroke-width="1.3"/>
</g>
<g transform="translate(301,69)">
<path d="M-9.5 -9.5h7l4 4v9.5h-11z" fill="#fff" stroke="#3a3a3a" stroke-width="1.1" />
<path d="M-2.5 -4h7l4.5 4.5v9.5h-11.5z M4.5 -4v4.5h4.5" fill="#fff" stroke="#3a3a3a" stroke-width="1.1" />
<path d="M-7 -4.5h3M-7 -1.5h3M0 3h6.5M0 6h6.5" fill="none" stroke="#1e8bcd" stroke-width="1" />
</g>
<g transform="translate(333,69)">
<path d="M-3.5 -7.5h-5.5v15.5h7M3.5 -7.5h5v4" fill="none" stroke="#ed8733" stroke-width="1.4" />
<path d="M-3.5 -6.5v-2.5h2l1.2-1.5h0.6l1.2 1.5h2v2.5z" fill="#fff" stroke="#3a3a3a" stroke-width="1" />
<path d="M0.5 -1.5h5l4 4v7.5h-9z M5.5 -1.5v4h4" fill="#fff" stroke="#3a3a3a" stroke-width="1.1" />
</g>
<path d="M351.3 69.3h7.4l-3.7 4z" fill="#000" />
<rect x="365" y="60" width="1" height="18" fill="#c6c6c6" shape-rendering="crispEdges"/>
<g transform="translate(385,69)">
<path d="M8.5 -10l-4.5 8.5" fill="none" stroke="#3a3a3a" stroke-width="2" />
<path d="M-1 -4.5l9 5" fill="none" stroke="#3a3a3a" stroke-width="2.6" />
<path d="M-2 -2.5l8.5 4.8-2.5 6.5c-3 1.5-8 1.5-11 0z" fill="#f8db8f" stroke="#ed8733" stroke-width="1.1" />
<path d="M-6.5 4l10 3" fill="none" stroke="#ed8733" stroke-width="1" />
</g>
<rect x="405" y="60" width="1" height="18" fill="#c6c6c6" shape-rendering="crispEdges"/>
<g transform="translate(425,69)">
<path d="M-8 -3.5h10.5a5 5 0 0 1 0 12h-2.5" fill="none" stroke="#1e8bcd" stroke-width="1.4" />
<path d="M-3 -9l-5.5 5.5 5.5 5.5" fill="none" stroke="#1e8bcd" stroke-width="1.4" />
</g>
<path d="M444.3 69.3h7.4l-3.7 4z" fill="#000" />
<g transform="translate(469,69)">
<path d="M8 -3.5h-10.5a5 5 0 0 0 0 12h2.5" fill="none" stroke="#c4c4c4" stroke-width="1.4" />
<path d="M3 -9l5.5 5.5-5.5 5.5" fill="none" stroke="#c4c4c4" stroke-width="1.4" />
</g>
<path d="M488.3 69.3h7.4l-3.7 4z" fill="#b9b9b9" />
<rect x="502" y="60" width="1" height="18" fill="#c6c6c6" shape-rendering="crispEdges"/>
<g transform="translate(523.5,69)">
<circle cx="1" cy="-3" r="6.8" fill="#fff" stroke="#3a3a3a" stroke-width="1.4"/>
<path d="M-4 2l-6.5 6.5" fill="none" stroke="#3a3a3a" stroke-width="2" />
<text x="-2.6" y="0.2" font-size="10.5" fill="#1e8bcd">a</text>
<text x="3.2" y="9.5" font-size="11" fill="#3a3a3a">d</text>
</g>
<g transform="translate(555.5,69)">
<text x="-11" y="-0.5" font-size="12.5" fill="#3a3a3a" textLength="21.5" lengthAdjust="spacing">abc</text>
<path d="M-2 6l3 3.2 8-8.2" fill="none" stroke="#18a84c" stroke-width="1.6" />
</g>
<g transform="translate(588.5,69)">
<path d="M0 -8.5h7.5M0.8 -8.5v18M5.3 -8.5v18" fill="none" stroke="#3a3a3a" stroke-width="1.5" />
<path d="M1 -9.2c-10 -0.5-10 9.5 0 9z" fill="#3a3a3a" />
</g>
<rect x="608" y="60" width="1" height="18" fill="#c6c6c6" shape-rendering="crispEdges"/>
<g transform="translate(628,69)">
<rect x="-9.5" y="-9" width="19" height="18" fill="#dedede" stroke="#c4c4c4" stroke-width="1"/>
<rect x="-9.5" y="-9" width="19" height="3.5" fill="#cfcfcf"/>
<path d="M-9.5 -1.5h19M-9.5 2h19M-9.5 5.5h19M-3.2 -5.5v14.5M3.2 -5.5v14.5" fill="none" stroke="#c9c9c9" stroke-width="1" />
</g>
<path d="M647.3 69.3h7.4l-3.7 4z" fill="#b9b9b9" />
<g transform="translate(674,69)">
<rect x="-9.5" y="-9.5" width="19" height="19" fill="#fff" stroke="#3a3a3a" stroke-width="1.3"/>
<path d="M-8.8 8.8v-3.5l5-5.5 3 3 4-4.5 5.6 6v4.5z" fill="#83beec" stroke="#1e8bcd" stroke-width="1" />
<circle cx="-4.2" cy="-4.8" r="1.8" fill="#f7b46b" stroke="#ed8733" stroke-width="0.8"/>
</g>
<g transform="translate(706.5,69)">
<rect x="-9" y="-4.5" width="4.5" height="14" fill="#dedede" stroke="#c4c4c4" stroke-width="0.8"/>
<rect x="-2.2" y="-9.5" width="4.5" height="19" fill="#dedede" stroke="#c4c4c4" stroke-width="0.8"/>
<rect x="4.6" y="-1.5" width="4.5" height="11" fill="#cdcdcd" stroke="#c4c4c4" stroke-width="0.8"/>
</g>
<g transform="translate(740,69)">
<rect x="-10.5" y="-9.5" width="21" height="19" fill="#fff" stroke="#3a3a3a" stroke-width="1.3"/>
<text x="-8.6" y="4.5" font-size="13" fill="#1e8bcd">A</text>
<path d="M1.5 -5.5h7M1.5 -1.5h7M1.5 2.5h7M-7.5 6.5h16" fill="none" stroke="#3a3a3a" stroke-width="1" />
</g>
<rect x="760" y="60" width="1" height="18" fill="#c6c6c6" shape-rendering="crispEdges"/>
<g transform="translate(781,69)">
<rect x="-6.5" y="-10" width="15" height="8" fill="#dedede"/>
<rect x="-6.5" y="2" width="15" height="8" fill="#dedede"/>
<path d="M-6.5 -10v8M8.5 -10v8M-6.5 10v-8M8.5 10v-8" fill="none" stroke="#c4c4c4" stroke-width="1" />
<path d="M-6.5 0h15" fill="none" stroke="#c4c4c4" stroke-width="1" stroke-dasharray="3 2"/>
<path d="M-11 -2.5l3 2.5-3 2.5z" fill="#c4c4c4" />
</g>
<g transform="translate(812,69)">
<path d="M-7.5 -9.5h10l5 5v14h-15z" fill="#dedede" stroke="#c4c4c4" stroke-width="1" />
<path d="M-3 1.5h-1.5v5h1.5M3 1.5h1.5v5h-1.5M-2 4h4" fill="none" stroke="#c0c0c0" stroke-width="1" />
</g>
<path d="M831.3 69.3h7.4l-3.7 4z" fill="#b9b9b9" />
<g transform="translate(856,69)">
<path d="M-9.5 9.5h6.5v-2c-4-2.5-5.5-5.5-5.5-9 0-5 4-8 8.5-8s8.5 3 8.5 8c0 3.5-1.5 6.5-5.5 9v2h6.5" fill="none" stroke="#c4c4c4" stroke-width="1.4" />
</g>
<path d="M875.3 69.3h7.4l-3.7 4z" fill="#b9b9b9" />
<rect x="889" y="60" width="1" height="18" fill="#c6c6c6" shape-rendering="crispEdges"/>
<g transform="translate(909,69)">
<g fill="none" stroke="#3a3a3a" stroke-width="1.2">
<path d="M-6.97 2A8.3 8.3 0 1 1 7.57 2M-8 -2h16.6M-6.97 -6h14.54M0.3 -10.3v12.3M-3.2 2c-1.300-4-1-8.500 1.500-12M3.800 2c1.300-4 1-8.500-1.500-12" fill="none" />
</g>
<path d="M-2 5h-3.2a2.6 2.6 0 0 0 0 5.2h3.2M2.5 5h3.2a2.6 2.6 0 0 1 0 5.2h-3.2M-3.5 7.6h7.5" fill="none" stroke="#1e8bcd" stroke-width="1.3" />
</g>
<g transform="translate(943,69)">
<path d="M-7.5 -10h10l5 5v15h-15z" fill="#dedede" stroke="#c4c4c4" stroke-width="1" />
<text x="0" y="2.5" font-size="8" fill="#c2c2c2" text-anchor="middle">1</text>
<path d="M-5 5.5h10M-5 7.5h10" fill="none" stroke="#c8c8c8" stroke-width="0.8" />
</g>
<g transform="translate(977,69)">
<path d="M-10.5 -10h7l3 3v11h-10z" fill="#dedede" stroke="#c4c4c4" stroke-width="1" />
<path d="M-6.5 -7.5h7l3 3v11h-10z" fill="#dedede" stroke="#c4c4c4" stroke-width="1" />
<path d="M-2.5 -5h7l3 3v13h-10z" fill="#dedede" stroke="#c4c4c4" stroke-width="1" />
<text x="7" y="10.5" font-size="8" fill="#c2c2c2" text-anchor="middle">[i]</text>
</g>
<g transform="translate(1010,69)">
<path d="M-9 -9.5h8l4 4v12h-12z" fill="#dedede" stroke="#c4c4c4" stroke-width="1" />
<path d="M-2.5 -9.5h6l4 4v3" fill="#dedede" stroke="#c4c4c4" stroke-width="1" />
<path d="M0 -3.5v13.5M2 -2.5l8.5 5.2-8.5 5.2z" fill="#c9c9c9" stroke="#c4c4c4" stroke-width="1" />
</g>
<g transform="translate(1042,69)">
<rect x="-9.5" y="-9.5" width="12" height="12" fill="#dedede" stroke="#c4c4c4" stroke-width="1"/>
<rect x="-1.5" y="-1.5" width="11" height="11" fill="#dedede" stroke="#c4c4c4" stroke-width="1"/>
<path d="M-7 -4h7M2 3h3v4M3 5.5l2 2 2-2" fill="none" stroke="#c0c0c0" stroke-width="1" />
</g>
<rect x="1062" y="60" width="1" height="18" fill="#c6c6c6" shape-rendering="crispEdges"/>
<g transform="translate(1083,69)">
<path d="M-10 -9.5h20v13.5h-10.5l-5 5.5v-5.5h-4.5z" fill="#fff" stroke="#3a3a3a" stroke-width="1.3" />
</g>
<g transform="translate(1117.5,69)">
<path d="M-9 -9.5h10.5l5 5v14h-15.5z M1.5 -9.5v5h5" fill="#fff" stroke="#3a3a3a" stroke-width="1.2" />
<path d="M-6 -3.5h6M-6 -0.5h9M-6 2.5h6M-6 5.5h4" fill="none" stroke="#ed8733" stroke-width="1" />
<path d="M-1.5 9.5l1-3.5 7-7 2.5 2.5-7 7z" fill="#83beec" stroke="#1e8bcd" stroke-width="1.1" />
</g>
<rect x="1136" y="60" width="1" height="18" fill="#c6c6c6" shape-rendering="crispEdges"/>
<g transform="translate(1157,69)">
<path d="M-10 -10l20 20" fill="none" stroke="#1e8bcd" stroke-width="1.3" />
</g>
<g transform="translate(1188,69)">
<rect x="-10" y="-8" width="20" height="16" fill="#fff" stroke="#3a3a3a" stroke-width="1.3"/>
</g>
<path d="M1207.3 69.3h7.4l-3.7 4z" fill="#000" />
<g transform="translate(1234,69)">
<circle cx="3.5" cy="-3.5" r="6.3" fill="#fff" stroke="#3a3a3a" stroke-width="1.2"/>
<rect x="-10" y="-3.5" width="11.5" height="11.5" fill="#fff" stroke="#3a3a3a" stroke-width="1.2"/>
<path d="M2 -1.5l6.5 5.5-6.5 5.5-6.5-5.5z" fill="#fff" stroke="#3a3a3a" stroke-width="1.2" />
</g>
<g transform="translate(18.2,108)">
<circle cx="0" cy="-8" r="1.9" fill="#fff" stroke="#1e8bcd" stroke-width="1.2"/>
<path d="M0 -6v15.500M-4 -2.500h8M-8.500 3.500c0.800 3.800 4 6 8.500 6s7.700-2.200 8.500-6M-10 6.300l1.300-3.500 3.200 1.800M10 6.300l-1.300-3.500-3.200 1.800" fill="none" stroke="#1e8bcd" stroke-width="1.15" />
</g>
<path d="M38.3 108.5h7.4l-3.7 4z" fill="#000" />
<rect x="52" y="99" width="1" height="18" fill="#c6c6c6" shape-rendering="crispEdges"/>
<g transform="translate(73,108.5)">
<rect x="-10" y="-9.5" width="20" height="1" fill="#3a3a3a" shape-rendering="crispEdges"/>
<rect x="-10" y="-6.5" width="20" height="1" fill="#3a3a3a" shape-rendering="crispEdges"/>
<rect x="-10" y="5.5" width="20" height="1" fill="#3a3a3a" shape-rendering="crispEdges"/>
<rect x="-10" y="8.5" width="20" height="1" fill="#3a3a3a" shape-rendering="crispEdges"/>
<rect x="-5" y="-4" width="10" height="8" fill="#83beec" stroke="#1e8bcd" stroke-width="1.2"/>
</g>
<g transform="translate(106,108.5)">
<rect x="-10" y="-9.5" width="20" height="1" fill="#3a3a3a" shape-rendering="crispEdges"/>
<rect x="-10" y="-6.5" width="20" height="1" fill="#3a3a3a" shape-rendering="crispEdges"/>
<rect x="-10" y="-3.5" width="20" height="1" fill="#3a3a3a" shape-rendering="crispEdges"/>
<rect x="-10" y="-0.5" width="20" height="1" fill="#3a3a3a" shape-rendering="crispEdges"/>
<rect x="-10" y="2.5" width="20" height="1" fill="#3a3a3a" shape-rendering="crispEdges"/>
<rect x="-10" y="5.5" width="20" height="1" fill="#3a3a3a" shape-rendering="crispEdges"/>
<rect x="-10" y="8.5" width="20" height="1" fill="#3a3a3a" shape-rendering="crispEdges"/>
<rect x="-6.5" y="-5" width="13" height="10" fill="#fbfbfb"/>
<rect x="-5" y="-4" width="10" height="8" fill="#83beec" stroke="#1e8bcd" stroke-width="1.2"/>
</g>
<rect x="122.5" y="91.5" width="32" height="33" fill="#cce4f7" stroke="#99d1ff" stroke-width="1" shape-rendering="crispEdges"/>
<g transform="translate(139,108.5)">
<rect x="-10" y="-9.5" width="20" height="1" fill="#3a3a3a" shape-rendering="crispEdges"/>
<rect x="-10" y="-6.5" width="20" height="1" fill="#3a3a3a" shape-rendering="crispEdges"/>
<rect x="-10" y="-3.5" width="20" height="1" fill="#3a3a3a" shape-rendering="crispEdges"/>
<rect x="-10" y="-0.5" width="20" height="1" fill="#3a3a3a" shape-rendering="crispEdges"/>
<rect x="-10" y="2.5" width="20" height="1" fill="#3a3a3a" shape-rendering="crispEdges"/>
<rect x="-10" y="5.5" width="20" height="1" fill="#3a3a3a" shape-rendering="crispEdges"/>
<rect x="-10" y="8.5" width="20" height="1" fill="#3a3a3a" shape-rendering="crispEdges"/>
<rect x="-6" y="-5.5" width="12" height="11" fill="#cce4f7"/>
<rect x="-5" y="-4.5" width="10" height="9" fill="#83beec" stroke="#ed8733" stroke-width="1.4"/>
</g>
<g transform="translate(172,108.5)">
<rect x="-10" y="-9.5" width="20" height="1" fill="#3a3a3a" shape-rendering="crispEdges"/>
<rect x="-10" y="-6.5" width="20" height="1" fill="#3a3a3a" shape-rendering="crispEdges"/>
<rect x="-10" y="-3.5" width="20" height="1" fill="#3a3a3a" shape-rendering="crispEdges"/>
<rect x="-10" y="-0.5" width="20" height="1" fill="#3a3a3a" shape-rendering="crispEdges"/>
<rect x="-10" y="2.5" width="20" height="1" fill="#3a3a3a" shape-rendering="crispEdges"/>
<rect x="-10" y="5.5" width="20" height="1" fill="#3a3a3a" shape-rendering="crispEdges"/>
<rect x="-10" y="8.5" width="20" height="1" fill="#3a3a3a" shape-rendering="crispEdges"/>
<rect x="0" y="-5" width="11" height="10" fill="#fbfbfb"/>
<rect x="2" y="-4" width="8.5" height="8" fill="#83beec" stroke="#1e8bcd" stroke-width="1.2"/>
</g>
<g transform="translate(205,108.5)">
<rect x="-10" y="-9.5" width="20" height="1" fill="#3a3a3a" shape-rendering="crispEdges"/>
<rect x="-10" y="-6.5" width="20" height="1" fill="#3a3a3a" shape-rendering="crispEdges"/>
<rect x="-10" y="-3.5" width="20" height="1" fill="#3a3a3a" shape-rendering="crispEdges"/>
<rect x="-10" y="-0.5" width="20" height="1" fill="#3a3a3a" shape-rendering="crispEdges"/>
<rect x="-10" y="2.5" width="20" height="1" fill="#3a3a3a" shape-rendering="crispEdges"/>
<rect x="-10" y="5.5" width="20" height="1" fill="#3a3a3a" shape-rendering="crispEdges"/>
<rect x="-10" y="8.5" width="20" height="1" fill="#3a3a3a" shape-rendering="crispEdges"/>
<rect x="-11" y="-5" width="11" height="10" fill="#fbfbfb"/>
<rect x="-10" y="-4" width="8.5" height="8" fill="#83beec" stroke="#1e8bcd" stroke-width="1.2"/>
</g>
<g transform="translate(238,108.5)">
<rect x="-10" y="-9.5" width="20" height="1" fill="#3a3a3a" shape-rendering="crispEdges"/>
<rect x="-10" y="-6.5" width="20" height="1" fill="#3a3a3a" shape-rendering="crispEdges"/>
<rect x="-10" y="-3.5" width="20" height="1" fill="#3a3a3a" shape-rendering="crispEdges"/>
<rect x="-10" y="-0.5" width="20" height="1" fill="#3a3a3a" shape-rendering="crispEdges"/>
<rect x="-10" y="2.5" width="20" height="1" fill="#3a3a3a" shape-rendering="crispEdges"/>
<rect x="-10" y="5.5" width="20" height="1" fill="#3a3a3a" shape-rendering="crispEdges"/>
<rect x="-10" y="8.5" width="20" height="1" fill="#3a3a3a" shape-rendering="crispEdges"/>
<rect x="-4" y="-4" width="9" height="8" fill="#83beec" stroke="#1e8bcd" stroke-width="1.2"/>
</g>
<rect x="258" y="99" width="1" height="18" fill="#c6c6c6" shape-rendering="crispEdges"/>
<g transform="translate(277.5,108)">
<path d="M-9 -10v20" fill="none" stroke="#1e8bcd" stroke-width="1.3" />
<path d="M-7 -8h7M-4.5 -10.5l-2.5 2.5 2.5 2.5" fill="none" stroke="#1e8bcd" stroke-width="1.1" />
<rect x="-6.5" y="-3" width="16" height="5.5" fill="#fff" stroke="#3a3a3a" stroke-width="1.1"/>
<rect x="-6.5" y="5" width="9.5" height="5" fill="#fff" stroke="#3a3a3a" stroke-width="1.1"/>
</g>
<path d="M296.3 108.5h7.4l-3.7 4z" fill="#000" />
<rect x="310" y="99" width="1" height="18" fill="#c6c6c6" shape-rendering="crispEdges"/>
<g transform="translate(331,108)">
<path d="M-5 4.5h-4.5v5h5v-2.5M2.5 -9.5h7v7h-2.5" fill="none" stroke="#3a3a3a" stroke-width="1.2" />
<rect x="-6.5" y="-6" width="12.5" height="12.5" fill="#fbd79a" stroke="#ed8733" stroke-width="1.2"/>
</g>
<g transform="translate(364,108)">
<rect x="-9.5" y="1.5" width="10" height="8" fill="#fff" stroke="#3a3a3a" stroke-width="1.2"/>
<circle cx="2" cy="-1.5" r="8.2" fill="#fbd79a" stroke="#ed8733" stroke-width="1.2"/>
</g>
<g transform="translate(396.7,108)">
<circle cx="2.5" cy="-1.5" r="8.2" fill="#fbd79a" stroke="#ed8733" stroke-width="1.2"/>
<rect x="-9.5" y="1" width="11.5" height="8.5" fill="#fff" stroke="#3a3a3a" stroke-width="1.2"/>
</g>
<g transform="translate(430,108)">
<rect x="-6.5" y="-5.5" width="13" height="11.5" fill="#fbd79a" stroke="#ed8733" stroke-width="1.2"/>
<rect x="1" y="-9.5" width="8.5" height="6.5" fill="#fff" stroke="#3a3a3a" stroke-width="1.2"/>
<rect x="-9.5" y="3" width="8.5" height="6.5" fill="#fff" stroke="#3a3a3a" stroke-width="1.2"/>
</g>
<rect x="450" y="99" width="1" height="18" fill="#c6c6c6" shape-rendering="crispEdges"/>
<g transform="translate(470,108)">
<rect x="-9" y="-9.5" width="15" height="19" fill="#dedede" stroke="#cfcfcf" stroke-width="1"/>
<path d="M-7 -5h8M-7 -2h5M-7 1h5M-7 4h5M-7 7h8" fill="none" stroke="#cfcfcf" stroke-width="0.9" />
<circle cx="3.5" cy="-0.5" r="6.5" fill="#d4d4d4" stroke="#cfcfcf" stroke-width="0.8"/>
</g>
<g transform="translate(503,108)">
<rect x="-9" y="-9.5" width="15" height="19" fill="#dedede" stroke="#cfcfcf" stroke-width="1"/>
<path d="M-7 -5h8M-7 -2h5M-7 1h5M-7 4h5M-7 7h8" fill="none" stroke="#cfcfcf" stroke-width="0.9" />
<circle cx="4" cy="-0.5" r="6.5" fill="#d4d4d4" stroke="#cfcfcf" stroke-width="0.8"/>
</g>
<rect x="523" y="99" width="1" height="18" fill="#c6c6c6" shape-rendering="crispEdges"/>
<g transform="translate(542,108)">
<path d="M-9.5 9.5v-19h19v19M0 -9.5v19M-9.5 0h19" fill="none" stroke="#3a3a3a" stroke-width="1.2" />
<path d="M-10 9.7h20" fill="none" stroke="#ed8733" stroke-width="1.4" />
</g>
<path d="M562.3 108.5h7.4l-3.7 4z" fill="#000" />
<g transform="translate(587,108)">
<rect x="-9.5" y="-10" width="19" height="2.6" fill="#3a3a3a"/>
<rect x="-9.5" y="-5" width="19" height="1.6" fill="#3a3a3a"/>
<path d="M-9.5 0.5h19" fill="none" stroke="#3a3a3a" stroke-width="1" stroke-dasharray="4 1.5 1.5 1.5"/>
<path d="M-9.5 4h19" fill="none" stroke="#3a3a3a" stroke-width="1" stroke-dasharray="2.5 1.5"/>
<rect x="-9.5" y="7" width="19" height="2.6" fill="#3a3a3a"/>
</g>
<path d="M606.3 108.5h7.4l-3.7 4z" fill="#000" />
<g transform="translate(631,108)">
<rect x="-10.5" y="-10.5" width="21" height="15" fill="#fff" stroke="#1e8bcd" stroke-width="1.1"/>
<rect x="-8" y="-8" width="16" height="10.5" fill="#fff" stroke="#3a3a3a" stroke-width="1.2"/>
<rect x="-12" y="6" width="24" height="5.5" fill="#2a6099"/>
</g>
<path d="M650.3 108.5h7.4l-3.7 4z" fill="#000" />
<g transform="translate(675,108)">
<path d="M-8.5 4v-7c0-3 2-4 4-4z" fill="#1e8bcd" />
<path d="M-5 -5l7.5-3.5 5 10-8 3.5z" fill="#fff" stroke="#3a3a3a" stroke-width="1.2" />
<path d="M0.5 -6.5c0-4 5-4 4.5 0.5" fill="none" stroke="#3a3a3a" stroke-width="1.1" />
<rect x="-12" y="6" width="24" height="5.5" fill="#ffff00"/>
</g>
<path d="M694.3 108.5h7.4l-3.7 4z" fill="#000" />
<rect x="708" y="99" width="1" height="18" fill="#c6c6c6" shape-rendering="crispEdges"/>
<g transform="translate(729,108)">
<rect x="-10" y="-2" width="12" height="9" fill="none" stroke="#cfcfcf" stroke-width="1.3" rx="4"/>
<rect x="-2.5" y="-8" width="12.5" height="9" fill="none" stroke="#cfcfcf" stroke-width="1.3" rx="4"/>
</g>
<g transform="translate(762,108)">
<rect x="-10" y="-2" width="12" height="9" fill="none" stroke="#cfcfcf" stroke-width="1.3" rx="4"/>
<rect x="-2.5" y="-8" width="12.5" height="9" fill="none" stroke="#cfcfcf" stroke-width="1.3" rx="4"/>
<path d="M2 3.5l8 7.5M10 3.5l-8 7.5" fill="none" stroke="#cfcfcf" stroke-width="1" />
</g>
<g transform="translate(824.5,108)">
<path d="M-9.5 6.5l13-13 3.5 3.5-13 13z" fill="#3a3a3a" />
<path d="M3.5 -6.5l2-2 3.5 3.5-2 2z" fill="#fff" stroke="#3a3a3a" stroke-width="1" />
<path d="M-10.5 -3.5l3.5-7 5.5-1-2.5 3.5 2.5 0.5z" fill="#ed8733" />
</g>
<path d="M844.3 108.5h7.4l-3.7 4z" fill="#000" />
<rect x="858" y="99" width="1" height="18" fill="#c6c6c6" shape-rendering="crispEdges"/>
<rect x="862.5" y="97.5" width="86" height="22.5" fill="#fff" stroke="#7a7a7a" stroke-width="1" shape-rendering="crispEdges"/>
<rect x="931.5" y="98.5" width="16.5" height="20.5" fill="#e1e1e1" stroke="#adadad" stroke-width="1" shape-rendering="crispEdges"/>
<path d="M935.5 106.5l4.3 4.3 4.3-4.3" fill="none" stroke="#444" stroke-width="1.1" />
<text x="865" y="113" font-size="12" fill="#000" textLength="37.5" lengthAdjust="spacing">Default</text>
<rect x="952" y="99" width="1" height="18" fill="#c6c6c6" shape-rendering="crispEdges"/>
<g transform="translate(975,108)">
<rect x="-10.5" y="-9.5" width="15" height="18" fill="#fff" stroke="#3a3a3a" stroke-width="1.2"/>
<path d="M5 -9.5h4.5v12" fill="none" stroke="#3a3a3a" stroke-width="1.1" stroke-dasharray="2.5 1.8"/>
<path d="M-9.5 7.5l4.5-5 2.5 2.5 3-3.5" fill="#83beec" stroke="#1e8bcd" stroke-width="1" />
<circle cx="-5.5" cy="-4.5" r="1.7" fill="#f7b46b" stroke="#ed8733" stroke-width="0.8"/>
<path d="M4.5 1.5v9.5M0.5 5h10.5M0.5 5v0M9 3v6" fill="none" stroke="#1e8bcd" stroke-width="1.3" />
</g>
<rect x="993" y="99" width="1" height="18" fill="#c6c6c6" shape-rendering="crispEdges"/>
<g transform="translate(1015.5,108)">
<path d="M8.5 -1.5v-8l-17 8z" fill="#83beec" stroke="#1e8bcd" stroke-width="1.1" />
<path d="M8.5 1.5v8l-17-8z" fill="#fff" stroke="#3a3a3a" stroke-width="1.1" />
</g>
<g transform="translate(1047.5,108)">
<path d="M-1.5 8.5h-8l8-17z" fill="#fff" stroke="#3a3a3a" stroke-width="1.1" />
<path d="M1.5 8.5h8l-8-17z" fill="#83beec" stroke="#1e8bcd" stroke-width="1.1" />
</g>
<g transform="translate(1081,108)">
<path d="M-3 7.5h-7.5l7.5-16z" fill="#83beec" stroke="#1e8bcd" stroke-width="1.1" />
<path d="M-0.5 7.5v-7.5l11.5 7.5z" fill="#fff" stroke="#3a3a3a" stroke-width="1.1" />
<path d="M8 -1.5c0-4-2-6-6-6.5M4 -10.5l-2.5 2.5 2.5 2.5" fill="none" stroke="#1e8bcd" stroke-width="1.2" />
</g>
<g transform="translate(1114,108)">
<path d="M3 7.5h7.5l-7.5-16z" fill="#83beec" stroke="#1e8bcd" stroke-width="1.1" />
<path d="M0.5 7.5v-7.5l-11.5 7.5z" fill="#fff" stroke="#3a3a3a" stroke-width="1.1" />
<path d="M-8 -1.5c0-4 2-6 6-6.5M-4 -10.5l2.5 2.5-2.5 2.5" fill="none" stroke="#1e8bcd" stroke-width="1.2" />
</g>
<g transform="translate(1148,108)">
<path d="M-9.5 -8.5h18.5v8M-9.5 -8.5v17h8" fill="none" stroke="#3a3a3a" stroke-width="1.2" />
<rect x="-11.0" y="-10.0" width="3" height="3" fill="#fff" stroke="#1e8bcd" stroke-width="1"/>
<rect x="7.5" y="-10.0" width="3" height="3" fill="#fff" stroke="#1e8bcd" stroke-width="1"/>
<rect x="-11.0" y="7.0" width="3" height="3" fill="#fff" stroke="#1e8bcd" stroke-width="1"/>
<path d="M2.5 4.5a4.6 4.6 0 1 0 4.6-4.6M2 1.5v3.5h3.5" fill="none" stroke="#1e8bcd" stroke-width="1.2" />
</g>
<rect x="1166" y="99" width="1" height="18" fill="#c6c6c6" shape-rendering="crispEdges"/>
<g transform="translate(1179,108)">
<path d="M0 -8c-5 0-8 3.5-8 8s3.5 8 7.5 8c2 0 1.5-2 1-3-0.5-1.500 0.5-2.500 2-2.500h3c2 0 2.500-1.500 2.500-3 0-4.500-3.500-7.500-8-7.500z" fill="#fff" stroke="#3a3a3a" stroke-width="1.2" />
<circle cx="-4.5" cy="-2.5" r="1.1" fill="#3a3a3a"/>
<circle cx="-1.5" cy="-5" r="1.1" fill="#3a3a3a"/>
<circle cx="2.5" cy="-4.5" r="1.1" fill="#3a3a3a"/>
<circle cx="-4.5" cy="2.5" r="1.1" fill="#3a3a3a"/>
</g>
<rect x="1191.5" y="97.5" width="69" height="21.5" fill="#fff" stroke="#a0a0a0" stroke-width="1" shape-rendering="crispEdges"/>
<text transform="translate(1195 113) scale(1 1.047)" font-size="11.46" fill="#000" textLength="16" lengthAdjust="spacing">0%</text>
<rect x="1244.5" y="99.5" width="14" height="8.5" fill="#f0f0f0" stroke="#b0b0b0" stroke-width="1" shape-rendering="crispEdges"/>
<rect x="1244.5" y="109.5" width="14" height="8.5" fill="#f0f0f0" stroke="#b0b0b0" stroke-width="1" shape-rendering="crispEdges"/>
<path d="M1248.5 105.5l3-3 3 3z" fill="#000" />
<path d="M1248.5 112l3 3 3-3z" fill="#000" />
<rect x="1265" y="99" width="1" height="18" fill="#c6c6c6" shape-rendering="crispEdges"/>
<g transform="translate(1286,108)">
<path d="M0 0L0.00 -10.00A10 10 0 0 1 9.51 -3.09z" fill="#f7cf62" stroke="#ffffff" stroke-width="0.6" />
<path d="M0 0L9.51 -3.09A10 10 0 0 1 5.88 8.09z" fill="#74cb86" stroke="#ffffff" stroke-width="0.6" />
<path d="M0 0L5.88 8.09A10 10 0 0 1 -5.88 8.09z" fill="#66a6e4" stroke="#ffffff" stroke-width="0.6" />
<path d="M0 0L-5.88 8.09A10 10 0 0 1 -9.51 -3.09z" fill="#b98be0" stroke="#ffffff" stroke-width="0.6" />
<path d="M0 0L-9.51 -3.09A10 10 0 0 1 -0.00 -10.00z" fill="#f26a74" stroke="#ffffff" stroke-width="0.6" />
<circle cx="0" cy="0" r="10" fill="none" stroke="#c98a98" stroke-width="0.7"/>
</g>
<rect x="0" y="153" width="7.5" height="5" fill="#fff" shape-rendering="crispEdges"/>
<path d="M7.500 153v5h-8" fill="none" stroke="#222" stroke-width="1" shape-rendering="crispEdges"/>
<rect x="929.5" y="153" width="8" height="5" fill="#fff" shape-rendering="crispEdges"/>
<path d="M929.5 153v5h8v-5" fill="none" stroke="#222" stroke-width="1" shape-rendering="crispEdges"/>
<rect x="-0.5" y="715.5" width="8" height="7.5" fill="#fff" stroke="#222" stroke-width="1" shape-rendering="crispEdges"/>
<defs><linearGradient id="gold" x1="0" y1="0" x2="1" y2="1"><stop offset="0" stop-color="#f2cf3a"/><stop offset="0.6" stop-color="#d9a710"/><stop offset="1" stop-color="#b58607"/></linearGradient></defs>
<rect x="14.5" y="159.5" width="19.5" height="19.5" fill="url(#gold)" stroke="#c79a14" stroke-width="0.6" rx="1.5"/>
<circle cx="24" cy="169.5" r="6.2" fill="none" stroke="#c08d0a" stroke-width="2.2"/>
<circle cx="24" cy="169.5" r="7.600" fill="none" stroke="#c08d0a" stroke-width="1.800" stroke-dasharray="2.400 2.375"/>
<path d="M24 164.500v10M19 169.500h5" fill="none" stroke="#c9970f" stroke-width="0.8" />
<circle cx="24" cy="169.5" r="2" fill="#c9970f"/>
<text transform="translate(46 174.3) scale(1 1.156)" font-size="11.25" fill="#1c1c26" textLength="200.5" lengthAdjust="spacing">TwinCAT Project as a server - TcXaeShell</text>
<text transform="translate(12.7 196.7) scale(1 1.17)" font-size="11.11" fill="#1c1c26" textLength="17.3" lengthAdjust="spacing">File</text>
<text transform="translate(49.3 196.7) scale(1 1.099)" font-size="11.83" fill="#1c1c26" textLength="19.7" lengthAdjust="spacing">Edit</text>
<text transform="translate(88.3 196.7) scale(1 1.106)" font-size="11.75" fill="#1c1c26" textLength="24.4" lengthAdjust="spacing">View</text>
<text transform="translate(132.3 196.7) scale(1 1.105)" font-size="11.77" fill="#1c1c26" textLength="35.4" lengthAdjust="spacing">Project</text>
<text transform="translate(187.3 196.7) scale(1 1.074)" font-size="12.1" fill="#1c1c26" textLength="26" lengthAdjust="spacing">Build</text>
<text transform="translate(232.7 196.7) scale(1 1.089)" font-size="11.94" fill="#1c1c26" textLength="34" lengthAdjust="spacing">Debug</text>
<text transform="translate(286 196.7) scale(1 1.136)" font-size="11.44" fill="#1c1c26" textLength="44" lengthAdjust="spacing">TwinCAT</text>
<text transform="translate(349 196.7) scale(1 1.19)" font-size="10.92" fill="#1c1c26" textLength="48.3" lengthAdjust="spacing">TwinSAFE</text>
<text transform="translate(416.7 196.7) scale(1 1.19)" font-size="10.92" fill="#1c1c26" textLength="20" lengthAdjust="spacing">PLC</text>
<text transform="translate(456.7 196.7) scale(1 1.155)" font-size="11.26" fill="#1c1c26" textLength="26.6" lengthAdjust="spacing">Team</text>
<text transform="translate(502.7 196.7) scale(1 1.137)" font-size="11.43" fill="#1c1c26" textLength="31.3" lengthAdjust="spacing">Scope</text>
<text transform="translate(554 196.7) scale(1 1.159)" font-size="11.22" fill="#1c1c26" textLength="25.3" lengthAdjust="spacing">Tools</text>
<text transform="translate(599 196.7) scale(1 1.046)" font-size="12.43" fill="#1c1c26" textLength="42.7" lengthAdjust="spacing">Window</text>
<text transform="translate(661 196.7) scale(1 1.076)" font-size="12.08" fill="#1c1c26" textLength="24" lengthAdjust="spacing">Help</text>
<path d="M1515.5 160.5h12.5l-5 6.5v5.500l-2.500-1.500v-4z" fill="none" stroke="#5f6b80" stroke-width="1.1" />
<path d="M1551.500 161h8.500v6.500h-3l-2 2v-2h-3.500z" fill="#fff" stroke="#3c4558" stroke-width="1" />
<circle cx="1549.5" cy="166" r="2" fill="#3c4558"/>
<path d="M1546 172.500c0-3.500 7-3.500 7 0z" fill="#3c4558" />
<rect x="1569.5" y="155.5" width="193" height="19.5" fill="#fdfdfe" stroke="#c5cad6" stroke-width="1" shape-rendering="crispEdges"/>
<text transform="translate(1574.3 170) scale(1 1.085)" font-size="11.98" fill="#6d7686" textLength="115.5" lengthAdjust="spacing">Quick Launch (Ctrl+Q)</text>
<circle cx="1755.5" cy="162.5" r="3.3" fill="none" stroke="#6c6c6c" stroke-width="1.5"/>
<path d="M1753.200 165l-5 5" fill="none" stroke="#6c6c6c" stroke-width="2" />
<rect x="1778" y="168" width="9" height="3" fill="#1b1b1b" shape-rendering="crispEdges"/>
<path d="M1810.500 164.500h7v7h-7z M1812.500 164.500v-2.500h7v7h-2" fill="none" stroke="#1b1b1b" stroke-width="1.6" />
<path d="M1843.500 162.500l8 8.500M1851.500 162.500l-8 8.500" fill="none" stroke="#1b1b1b" stroke-width="2" />
<rect x="13" y="205" width="1210.5" height="22" fill="#cfd6e5" shape-rendering="crispEdges"/>
<rect x="1223.5" y="205" width="10" height="22" fill="#dde2ee" shape-rendering="crispEdges"/>
<rect x="13" y="229.5" width="170" height="21.5" fill="#cfd6e5" shape-rendering="crispEdges"/>
<rect x="186" y="229.5" width="540" height="21.5" fill="#cfd6e5" shape-rendering="crispEdges"/>
<rect x="726" y="229.5" width="536" height="21.5" fill="#cfd6e5" shape-rendering="crispEdges"/>
<rect x="1262" y="229.5" width="10" height="21.5" fill="#dde2ee" shape-rendering="crispEdges"/>
<rect x="13" y="253.5" width="574" height="20" fill="#cfd6e5" shape-rendering="crispEdges"/>
<rect x="587" y="253.5" width="11" height="20" fill="#dde2ee" shape-rendering="crispEdges"/>
<rect x="14.5" y="208.0" width="1.2" height="1.2" fill="#8c95a8"/>
<rect x="17.5" y="208.0" width="1.2" height="1.2" fill="#8c95a8"/>
<rect x="16.0" y="211.6" width="1.2" height="1.2" fill="#8c95a8"/>
<rect x="19.0" y="211.6" width="1.2" height="1.2" fill="#8c95a8"/>
<rect x="14.5" y="215.2" width="1.2" height="1.2" fill="#8c95a8"/>
<rect x="17.5" y="215.2" width="1.2" height="1.2" fill="#8c95a8"/>
<rect x="16.0" y="218.8" width="1.2" height="1.2" fill="#8c95a8"/>
<rect x="19.0" y="218.8" width="1.2" height="1.2" fill="#8c95a8"/>
<rect x="14.5" y="222.4" width="1.2" height="1.2" fill="#8c95a8"/>
<rect x="17.5" y="222.4" width="1.2" height="1.2" fill="#8c95a8"/>
<rect x="14.5" y="232.5" width="1.2" height="1.2" fill="#8c95a8"/>
<rect x="17.5" y="232.5" width="1.2" height="1.2" fill="#8c95a8"/>
<rect x="16.0" y="236.1" width="1.2" height="1.2" fill="#8c95a8"/>
<rect x="19.0" y="236.1" width="1.2" height="1.2" fill="#8c95a8"/>
<rect x="14.5" y="239.7" width="1.2" height="1.2" fill="#8c95a8"/>
<rect x="17.5" y="239.7" width="1.2" height="1.2" fill="#8c95a8"/>
<rect x="16.0" y="243.3" width="1.2" height="1.2" fill="#8c95a8"/>
<rect x="19.0" y="243.3" width="1.2" height="1.2" fill="#8c95a8"/>
<rect x="14.5" y="246.9" width="1.2" height="1.2" fill="#8c95a8"/>
<rect x="17.5" y="246.9" width="1.2" height="1.2" fill="#8c95a8"/>
<rect x="14.5" y="256.5" width="1.2" height="1.2" fill="#8c95a8"/>
<rect x="17.5" y="256.5" width="1.2" height="1.2" fill="#8c95a8"/>
<rect x="16.0" y="260.1" width="1.2" height="1.2" fill="#8c95a8"/>
<rect x="19.0" y="260.1" width="1.2" height="1.2" fill="#8c95a8"/>
<rect x="14.5" y="263.7" width="1.2" height="1.2" fill="#8c95a8"/>
<rect x="17.5" y="263.7" width="1.2" height="1.2" fill="#8c95a8"/>
<rect x="16.0" y="267.3" width="1.2" height="1.2" fill="#8c95a8"/>
<rect x="19.0" y="267.3" width="1.2" height="1.2" fill="#8c95a8"/>
<rect x="14.5" y="270.9" width="1.2" height="1.2" fill="#8c95a8"/>
<rect x="17.5" y="270.9" width="1.2" height="1.2" fill="#8c95a8"/>
<rect x="188.5" y="232.5" width="1.2" height="1.2" fill="#8c95a8"/>
<rect x="191.5" y="232.5" width="1.2" height="1.2" fill="#8c95a8"/>
<rect x="190.0" y="236.1" width="1.2" height="1.2" fill="#8c95a8"/>
<rect x="193.0" y="236.1" width="1.2" height="1.2" fill="#8c95a8"/>
<rect x="188.5" y="239.7" width="1.2" height="1.2" fill="#8c95a8"/>
<rect x="191.5" y="239.7" width="1.2" height="1.2" fill="#8c95a8"/>
<rect x="190.0" y="243.3" width="1.2" height="1.2" fill="#8c95a8"/>
<rect x="193.0" y="243.3" width="1.2" height="1.2" fill="#8c95a8"/>
<rect x="188.5" y="246.9" width="1.2" height="1.2" fill="#8c95a8"/>
<rect x="191.5" y="246.9" width="1.2" height="1.2" fill="#8c95a8"/>
<rect x="728.5" y="232.5" width="1.2" height="1.2" fill="#8c95a8"/>
<rect x="731.5" y="232.5" width="1.2" height="1.2" fill="#8c95a8"/>
<rect x="730.0" y="236.1" width="1.2" height="1.2" fill="#8c95a8"/>
<rect x="733.0" y="236.1" width="1.2" height="1.2" fill="#8c95a8"/>
<rect x="728.5" y="239.7" width="1.2" height="1.2" fill="#8c95a8"/>
<rect x="731.5" y="239.7" width="1.2" height="1.2" fill="#8c95a8"/>
<rect x="730.0" y="243.3" width="1.2" height="1.2" fill="#8c95a8"/>
<rect x="733.0" y="243.3" width="1.2" height="1.2" fill="#8c95a8"/>
<rect x="728.5" y="246.9" width="1.2" height="1.2" fill="#8c95a8"/>
<rect x="731.5" y="246.9" width="1.2" height="1.2" fill="#8c95a8"/>
<circle cx="33.8" cy="216" r="6.3" fill="#00539c"/>
<path d="M37.500 216h-6.500M33.500 213l-3 3 3 3" fill="none" stroke="#fff" stroke-width="1.6" />
<path d="M47.3 216h6l-3 3.500z" fill="#1b1b1b" />
<circle cx="66.7" cy="216" r="5.6" fill="#b9c0cd"/>
<path d="M63 216h6.500M67 213l3 3-3 3" fill="none" stroke="#dfe3ec" stroke-width="1.6" />
<rect x="80.7" y="206.5" width="1.6" height="19.5" fill="#969db0"/>
<path d="M96.500 209.5h3.500l2.500 2.500v6" fill="none" stroke="#1b1b1b" stroke-width="1.2" />
<path d="M93.500 213.5h4.500l2.500 2.500v6.500h-7z" fill="#e8ebf3" stroke="#1b1b1b" stroke-width="1.2" />
<path d="M91.500 217v4" fill="none" stroke="#1b1b1b" stroke-width="1" />
<path d="M90.500 211h7M94 207.5v7M91.500 208.5l5 5M96.500 208.5l-5 5" fill="none" stroke="#d18b1e" stroke-width="1.1" />
<path d="M110.4 216h6l-3 3.500z" fill="#1b1b1b" />
<path d="M130 214h8v8.500h-8z" fill="#e3e7f0" stroke="#b3bac9" stroke-width="1.2" />
<path d="M124.500 211h7M128 207.5v7M125.500 208.5l5 5M130.500 208.5l-5 5" fill="none" stroke="#c5cad6" stroke-width="1" />
<path d="M144 216h6l-3 3.500z" fill="#9aa2b2" />
<path d="M157.500 222.5v-9.500h4l1.500 1.500h7.500v8z" fill="#e8b252" stroke="#c98f2a" stroke-width="1" />
<path d="M159.500 210.5c1-3 5-3.500 7-1M166.500 207v3h-3" fill="none" stroke="#00539c" stroke-width="1.5" />
<path d="M179 210h10l1.500 1.500v10.500h-11.500z" fill="#b9c0cd" />
<rect x="181.5" y="210" width="6" height="4" fill="#dfe3ec"/>
<rect x="181.5" y="217" width="6.5" height="5" fill="#dfe3ec"/>
<path d="M204.500 208.5h8l1.500 1.500v8h-9.500z" fill="#00539c" />
<rect x="206.5" y="208.5" width="4.5" height="3" fill="#cfd6e5"/>
<path d="M199.500 214h8l1.500 1.500v8h-9.500z" fill="#00539c" stroke="#cfd6e5" stroke-width="0.8" />
<rect x="201.5" y="214" width="4.5" height="3" fill="#cfd6e5"/>
<rect x="201.5" y="219.5" width="5" height="4" fill="#cfd6e5"/>
<rect x="220.7" y="206.5" width="1.6" height="19.5" fill="#969db0"/>
<path d="M232.500 209l5.500 9M239 209l-5.500 9" fill="none" stroke="#1b1b1b" stroke-width="1.6" />
<circle cx="232.8" cy="220.2" r="2" fill="none" stroke="#1b1b1b" stroke-width="1.3"/>
<circle cx="238.7" cy="220.2" r="2" fill="none" stroke="#1b1b1b" stroke-width="1.3"/>
<path d="M255.500 213v-3.500h7v8h-3M251.500 213.5h7v8.500h-7z" fill="none" stroke="#1b1b1b" stroke-width="1.4" />
<path d="M274 213.5h-3v9h11.500v-9h-3M274.500 214.5v-3h1.500v-2h2v2h1.500v3zM276.500 222.5v-4.500h4v4.500" fill="none" stroke="#1b1b1b" stroke-width="1.3" />
<rect x="291.7" y="206.5" width="1.6" height="19.5" fill="#969db0"/>
<path d="M302 210l1 4.500 4.500-1M303 214c4-5 10-2 8 3-1 2-3 3.500-6 5" fill="none" stroke="#9aa2b2" stroke-width="1.6" />
<path d="M321.4 216h6l-3 3.500z" fill="#9aa2b2" />
<path d="M347 210l-1 4.500-4.500-1M346 214c-4-5-10-2-8 3 1 2 3 3.500 6 5" fill="none" stroke="#b9c0cd" stroke-width="1.6" />
<path d="M355 216h6l-3 3.500z" fill="#9aa2b2" />
<rect x="367.7" y="206.5" width="1.6" height="19.5" fill="#969db0"/>
<rect x="375.5" y="206.5" width="86" height="19" fill="#ffffff" stroke="#c5cbd8" stroke-width="1" shape-rendering="crispEdges"/>
<text transform="translate(379.3 220) scale(1 1.19)" font-size="10.92" fill="#1c1c26" textLength="37.4" lengthAdjust="spacing">Release</text>
<path d="M451.5 215.5h6l-3 3.500z" fill="#1b1b1b" />
<rect x="468.5" y="206.5" width="153.5" height="19" fill="#ffffff" stroke="#c5cbd8" stroke-width="1" shape-rendering="crispEdges"/>
<text transform="translate(472.7 220) scale(1 1.19)" font-size="10.92" fill="#1c1c26" textLength="84.6" lengthAdjust="spacing">TwinCAT RT (x64)</text>
<path d="M612.0 215.5h6l-3 3.500z" fill="#1b1b1b" />
<path d="M634.500 211l8 5-8 5z" fill="#388a34" />
<text transform="translate(649.3 220) scale(1 1.087)" font-size="11.96" fill="#1c1c26" textLength="42.4" lengthAdjust="spacing">Attach...</text>
<path d="M697.7 216h6l-3 3.500z" fill="#1b1b1b" />
<rect x="710.5" y="206.5" width="124" height="19" fill="#d6dbe9" stroke="#bcc3d3" stroke-width="1" shape-rendering="crispEdges"/>
<path d="M824.5 215.5h6l-3 3.500z" fill="#9aa2b2" />
<rect x="841.7" y="206.5" width="1.6" height="19.5" fill="#969db0"/>
<path d="M855 209h4l1 1.500h4v7h-9z" fill="#e8b252" stroke="#c98f2a" stroke-width="0.8" />
<circle cx="853.5" cy="218.5" r="2.6" fill="#cfd6e5" stroke="#00539c" stroke-width="1.4"/>
<path d="M851.800 220.5l-2.500 2.500" fill="none" stroke="#00539c" stroke-width="1.6" />
<rect x="871.5" y="206.5" width="177.5" height="19" fill="#ffffff" stroke="#c5cbd8" stroke-width="1" shape-rendering="crispEdges"/>
<path d="M1039.0 215.5h6l-3 3.500z" fill="#1b1b1b" />
<rect x="1055.7" y="206.5" width="1.6" height="19.5" fill="#969db0"/>
<g transform="translate(1062.500,206.5)">
<path d="M2.500 3v5M2.500 3.500h12.500v10.500h-4.500" fill="none" stroke="#1b1b1b" stroke-width="1.2" />
<rect x="2" y="2.5" width="13.5" height="2.2" fill="#1b1b1b"/>
<path d="M2 9.500l2.500 2.200-2.500 2.200zM9.500 7.500v8.500l-1.800 0.500-3.800-4.800 3.800-4.700zM7.300 10l-2 1.800 2 1.800z" fill="#68217a" stroke="#68217a" stroke-width="0.3" fill-rule="evenodd"/>
</g>
<path d="M1086.95 221.55L1093.48 215.03" stroke="#1b1b1b" stroke-width="2.90" stroke-linecap="round" fill="none"/>
<circle cx="1095.65" cy="212.85" r="4.35" fill="#1b1b1b"/>
<rect x="-1.59" y="-5.65" width="3.19" height="5.65" fill="#cfd6e5" transform="translate(1096.17 212.33) rotate(45)"/>
<path d="M1107.500 210.5h12.500v11h-4.500" fill="none" stroke="#1b1b1b" stroke-width="1.3" />
<rect x="1107" y="210" width="13.5" height="2.5" fill="#1b1b1b"/>
<path d="M1107 217h6v6h-6z" fill="#e8a33a" />
<path d="M1109 218.5l2 3M1111 218.5l-2 3" fill="none" stroke="#fff" stroke-width="0.8" />
<rect x="1128.5" y="213" width="13" height="9" fill="#1b1b1b"/>
<path d="M1132.500 213v-2.500h5v2.500" fill="none" stroke="#1b1b1b" stroke-width="1.3" />
<rect x="1128.5" y="216.5" width="13" height="1" fill="#cfd6e5"/>
<circle cx="1154.5" cy="212.5" r="2.3" fill="#1b1b1b"/>
<path d="M1150.500 221c0-6 8-6 8 0z" fill="#1b1b1b" />
<circle cx="1160.5" cy="215" r="1.8" fill="#1b1b1b"/>
<path d="M1157.500 222.5c0-5 6.500-5 6.500 0z" fill="#1b1b1b" />
<circle cx="1177.5" cy="216" r="5.5" fill="none" stroke="#1e90d8" stroke-width="2"/>
<circle cx="1177.5" cy="216" r="2" fill="none" stroke="#1e90d8" stroke-width="1.2"/>
<rect x="1181" y="209" width="4" height="5" fill="#cfd6e5"/>
<rect x="1193.5" y="211" width="13" height="10" fill="none" stroke="#1b1b1b" stroke-width="1.4"/>
<path d="M1196 214l2.500 2-2.500 2" fill="none" stroke="#1b1b1b" stroke-width="1.1" />
<path d="M1213 216h6l-3 3.500z" fill="#1b1b1b" />
<rect x="1226" y="217" width="6" height="1.3" fill="#1b1b1b"/>
<path d="M1226 220h6l-3 3z" fill="#1b1b1b" />
<rect x="25.5" y="232.0" width="144.5" height="17" fill="#ffffff" stroke="#c5cbd8" stroke-width="1" shape-rendering="crispEdges"/>
<text transform="translate(29.5 245) scale(1 1.14)" font-size="11.4" fill="#1c1c26" textLength="114.5" lengthAdjust="spacing">Build 4024.53 (Loaded)</text>
<path d="M160.0 240.0h6l-3 3.500z" fill="#1b1b1b" />
<rect x="177" y="241.3" width="6" height="1.3" fill="#1b1b1b"/>
<path d="M177 244.3h6l-3 3z" fill="#1b1b1b" />
<rect x="199" y="244.8" width="2.6" height="2.6" fill="#0b4f86"/>
<rect x="199" y="241.3" width="2.6" height="2.6" fill="#0b4f86"/>
<rect x="202.5" y="244.8" width="2.6" height="2.6" fill="#0b4f86"/>
<rect x="202.5" y="241.3" width="2.6" height="2.6" fill="#0b4f86"/>
<rect x="206" y="244.8" width="2.6" height="2.6" fill="#0b4f86"/>
<rect x="199" y="237.8" width="2.6" height="2.6" fill="#0b4f86"/>
<rect x="209.5" y="244.8" width="2.6" height="2.6" fill="#0b4f86"/>
<path d="M203.500 234.8c3-2 6-1 7 2M211.500 234.3v3.500h-3.500" fill="none" stroke="#e8a33a" stroke-width="1.6" />
<rect x="217.5" y="229.5" width="21" height="21.5" fill="#fcf8ef" stroke="#55668a" stroke-width="1" shape-rendering="crispEdges"/>
<rect x="220.5" y="233" width="15" height="11.5" fill="#35b14a"/>
<rect x="220.5" y="244.5" width="15" height="3.5" fill="#d9b420"/>
<circle cx="228" cy="238.5" r="3.3" fill="none" stroke="#a8b3bd" stroke-width="2.2"/>
<rect x="241.7" y="230.8" width="1.6" height="19.5" fill="#969db0"/>
<rect x="249" y="233" width="15.5" height="11.5" fill="#2a2ee0"/>
<rect x="249" y="244.5" width="15.5" height="3.5" fill="#d9b420"/>
<circle cx="256.7" cy="238.5" r="3.3" fill="none" stroke="#b9bfd3" stroke-width="2.2"/>
<path d="M273.500 239.3c1-4 6-5 9-2M283.500 234.3v4h-4M283 241.8c-1 4-6 5-9 2M272.500 246.8v-4h4" fill="none" stroke="#b3bac9" stroke-width="2" />
<path d="M296.500 238.3l9.500 9.500" fill="none" stroke="#b3bac9" stroke-width="2" />
<path d="M293 234.3l3 3M297.500 233.3v2.500M292.500 238.8h2.500M300 234.8l-1.500 1.500" fill="none" stroke="#c0c6d3" stroke-width="1" />
<circle cx="321" cy="240.3" r="6" fill="none" stroke="#b9c0cd" stroke-width="1.4"/>
<circle cx="321" cy="240.3" r="2.8" fill="none" stroke="#b9c0cd" stroke-width="1.4"/>
<rect x="324" y="232.8" width="4" height="5" fill="#cfd6e5"/>
<rect x="333.7" y="230.8" width="1.6" height="19.5" fill="#969db0"/>
<rect x="339.5" y="229.5" width="20.5" height="21.5" fill="#fcf8ef" stroke="#55668a" stroke-width="1" shape-rendering="crispEdges"/>
<circle cx="349.7" cy="240.3" r="3.2" fill="#1c5fc0"/>
<path d="M345 235.8c-2.500 3-2.500 6 0 9M354.500 235.8c2.500 3 2.500 6 0 9" fill="none" stroke="#d62a2a" stroke-width="1.5" />
<rect x="360.5" y="229.5" width="21" height="21.5" fill="#fcf8ef" stroke="#55668a" stroke-width="1" shape-rendering="crispEdges"/>
<path d="M364 233.8h3l1 1h3v4h-7z" fill="#e8c45a" stroke="#c98f2a" stroke-width="0.7" />
<rect x="372.5" y="241.8" width="5.5" height="5" fill="#e8c45a" stroke="#c98f2a" stroke-width="0.7"/>
<rect x="364" y="242.3" width="4" height="3.5" fill="#b9c0cd" stroke="#8c95a8" stroke-width="0.7"/>
<path d="M367 238.8v5M367 241.3h5.500" fill="none" stroke="#8c95a8" stroke-width="0.8" />
<path d="M386 240.3c3-5 10-5 13 0-3 5-10 5-13 0z" fill="none" stroke="#1c3fa0" stroke-width="1.4" />
<circle cx="392.5" cy="240.3" r="2.3" fill="#1c3fa0"/>
<path d="M387 246.3l11.500-12" fill="none" stroke="#1c3fa0" stroke-width="1.4" />
<circle cx="396" cy="244.3" r="3" fill="#d62a2a"/>
<rect x="394.3" y="243.70000000000002" width="3.4" height="1.2" fill="#fff"/>
<rect x="406.7" y="230.8" width="1.6" height="19.5" fill="#969db0"/>
<rect x="414.5" y="232.0" width="142.5" height="17" fill="#ffffff" stroke="#c5cbd8" stroke-width="1" shape-rendering="crispEdges"/>
<text transform="translate(418.3 245) scale(1 1.165)" font-size="11.16" fill="#1c1c26" textLength="126" lengthAdjust="spacing">TwinCAT Project as a serv</text>
<path d="M547.0 240.0h6l-3 3.500z" fill="#1b1b1b" />
<rect x="565.5" y="232" width="144" height="18" fill="#fff" stroke="#c5cbd8" stroke-width="1" shape-rendering="crispEdges"/>
<path d="M571.500 246.3v-6.500h8.500v6.500z" fill="#fff" stroke="#1b1b1b" stroke-width="1.3" />
<path d="M573 239.8v-3a2.800 2.800 0 0 1 5.600 0v3z" fill="#1b1b1b" />
<text transform="translate(585.7 245) scale(1 1.19)" font-size="10.92" fill="#1c1c26" textLength="55" lengthAdjust="spacing">CX-5268BE</text>
<path d="M700.3 240.3h6l-3 3.500z" fill="#1b1b1b" />
<rect x="717" y="241.3" width="6" height="1.3" fill="#1b1b1b"/>
<path d="M717 244.3h6l-3 3z" fill="#1b1b1b" />
<rect x="739.5" y="232.0" width="143.5" height="17" fill="#ffffff" stroke="#c5cbd8" stroke-width="1" shape-rendering="crispEdges"/>
<text transform="translate(742.7 245) scale(1 1.087)" font-size="11.96" fill="#1c1c26" textLength="45.6" lengthAdjust="spacing">Untitled1</text>
<path d="M873.0 240.0h6l-3 3.500z" fill="#1b1b1b" />
<rect x="891.0" y="232.0" width="37" height="17" fill="#ffffff" stroke="#c5cbd8" stroke-width="1" shape-rendering="crispEdges"/>
<text x="895" y="245" font-size="13" fill="#1c1c26">1</text>
<path d="M918.0 240.0h6l-3 3.500z" fill="#1b1b1b" />
<rect x="934.7" y="230.8" width="1.6" height="19.5" fill="#969db0"/>
<rect x="942.5" y="232.8" width="15" height="15" fill="none" stroke="#2e9a2e" stroke-width="1.7"/>
<rect x="940" y="236.8" width="5" height="7" fill="#cfd6e5"/>
<path d="M941.500 240.3h9M947.500 236.8l3.500 3.500-3.500 3.500" fill="none" stroke="#2e9a2e" stroke-width="1.7" />
<path d="M967 234.8l8 5.500-8 5.500z" fill="#b9c0cd" />
<rect x="988.5" y="236.3" width="8" height="8" fill="#b9c0cd"/>
<path d="M1011 233.3h10.500v14h-10.500M1006.500 240.3h9M1010 236.8l-3.500 3.500 3.500 3.500" fill="none" stroke="#b9c0cd" stroke-width="1.6" />
<rect x="1027.7" y="230.8" width="1.6" height="19.5" fill="#969db0"/>
<path d="M1043 233.3v8M1040 238.3l3 3.500 3-3.500" fill="none" stroke="#b3bac9" stroke-width="1.6" />
<circle cx="1043" cy="245.8" r="1.6" fill="#b3bac9"/>
<path d="M1058.500 241.3c1-6 9-6 10.500 0M1069.500 236.3v5h-5" fill="none" stroke="#b3bac9" stroke-width="1.6" />
<circle cx="1064" cy="245.8" r="1.6" fill="#b3bac9"/>
<path d="M1085.500 241.8v-8M1082.500 236.8l3-3.500 3 3.500" fill="none" stroke="#b3bac9" stroke-width="1.6" />
<circle cx="1085.5" cy="245.8" r="1.6" fill="#b3bac9"/>
<path d="M1099.500 236.3l4 4-4 4z" fill="#b3bac9" />
<path d="M1105.500 235.3h8.500M1105.500 238.8h8.500M1105.500 242.3h8.500M1105.500 245.8h8.500" fill="none" stroke="#b3bac9" stroke-width="1.3" />
<path d="M1128.500 233.8a6 6 0 1 0 4.500 2M1128.500 232.3v4h4" fill="none" stroke="#b3bac9" stroke-width="1.6" />
<rect x="1142.7" y="230.8" width="1.6" height="19.5" fill="#969db0"/>
<rect x="1151.7" y="240.8" width="11" height="5.5" fill="none" stroke="#b9c0cd" stroke-width="1.3"/>
<path d="M1157.2 233.3v6M1154.7 236.8l2.500 2.500 2.500-2.500" fill="none" stroke="#b9c0cd" stroke-width="1.3" />
<rect x="1173.2" y="240.8" width="11" height="5.5" fill="none" stroke="#b9c0cd" stroke-width="1.3"/>
<path d="M1178.7 233.3v6M1176.2 236.8l2.500 2.500 2.500-2.500" fill="none" stroke="#b9c0cd" stroke-width="1.3" />
<rect x="1194.5" y="240.8" width="11" height="5.5" fill="none" stroke="#b9c0cd" stroke-width="1.3"/>
<path d="M1200 233.3v6M1197.5 236.8l2.500 2.500 2.500-2.500" fill="none" stroke="#b9c0cd" stroke-width="1.3" />
<rect x="1213.7" y="230.8" width="1.6" height="19.5" fill="#969db0"/>
<path d="M1234.5 238.3a6 6 0 1 1-6-4M1226 232.3v4.500h4.500" fill="none" stroke="#b9c0cd" stroke-width="1.6" />
<path d="M1255.8 238.3a6 6 0 1 1-6-4M1247.3 232.3v4.500h4.500" fill="none" stroke="#b9c0cd" stroke-width="1.6" />
<rect x="1264.7" y="241.3" width="6" height="1.3" fill="#1b1b1b"/>
<path d="M1264.7 244.3h6l-3 3z" fill="#1b1b1b" />
<rect x="25.5" y="255" width="289.5" height="17.5" fill="#dfe3ee" stroke="#bcc3d3" stroke-width="1" shape-rendering="crispEdges"/>
<text transform="translate(29.5 267.9) scale(1 1.141)" font-size="11.39" fill="#a3a8b3" textLength="270.3" lengthAdjust="spacing">opc.tcp://IWFPC439:4840 [Basic256Sha256, SignAndE</text>
<path d="M306 263.0h6l-3 3.500z" fill="#9aa2b2" />
<path d="M326.500 256.5v3.500M331 256.5v3.500M324.500 260.0h8.500v3.500c0 2-2 3-4.250 3s-4.250-1-4.250-3zM328.800 266.5v5" fill="#2f8a2b" stroke="#2f8a2b" stroke-width="1.3" />
<text x="332" y="271.5" font-size="5.5" fill="#2f8a2b" font-weight="bold">UA</text>
<path d="M344 263.5h4M348 259.5h6.500v8h-6.500zM354.500 261.0h3.500M354.500 266.0h3.500" fill="#c3c9d6" stroke="#c3c9d6" stroke-width="1.3" />
<text transform="translate(362.7 267.7) scale(1 1.081)" font-size="12.03" fill="#9da3b0" textLength="43.3" lengthAdjust="spacing">Connect</text>
<path d="M417 263.5h3.500M420.500 259.5h6v8h-6zM426.500 261.0h4.500M426.500 266.0h4.500" fill="#c8201f" stroke="#c8201f" stroke-width="1.5" />
<text transform="translate(436.7 267.7) scale(1 1.098)" font-size="11.84" fill="#1c1c26" textLength="56.6" lengthAdjust="spacing">Disconnect</text>
<rect x="504.5" y="257.0" width="3.8" height="3.8" fill="#2fa02a"/>
<rect x="504.5" y="261.6" width="3.8" height="3.8" fill="#2fa02a"/>
<rect x="504.5" y="266.2" width="3.8" height="3.8" fill="#2fa02a"/>
<rect x="509.1" y="257.0" width="3.8" height="3.8" fill="#2fa02a"/>
<rect x="509.1" y="261.6" width="3.8" height="3.8" fill="#2fa02a"/>
<rect x="509.1" y="266.2" width="3.8" height="3.8" fill="#2fa02a"/>
<rect x="513.7" y="266.2" width="3.8" height="3.8" fill="#2fa02a"/>
<path d="M512.500 258.5h5v5.500" fill="none" stroke="#e3cf1f" stroke-width="2" />
<path d="M538.500 261.5a5.500 5.500 0 1 0 0.500 4.500M539.500 257.0v4.500h-4.500" fill="none" stroke="#2f9a2b" stroke-width="1.7" />
<path d="M552.500 258.5h6l3 3v8.500h-9z" fill="#f3f5fa" stroke="#1b1b1b" stroke-width="1.1" />
<path d="M547.500 258.5h6M550.500 255.5v6M548.500 256.5l4 4M552.500 256.5l-4 4" fill="none" stroke="#2f9a2b" stroke-width="1.2" />
<path d="M569 270.0v-9.500h4.500l1.500 1.500h7.500v8z" fill="#e8862a" stroke="#b5651a" stroke-width="1" />
<path d="M571.500 258.5h4v-2.500h4.500" fill="none" stroke="#2f9a2b" stroke-width="1.6" />
<rect x="574.5" y="254.5" width="4.5" height="3" fill="#2f9a2b"/>
<rect x="589.7" y="264.5" width="6" height="1.3" fill="#1b1b1b"/>
<path d="M589.7 267.5h6l-3 3z" fill="#1b1b1b" />
<rect x="9.3" y="282" width="510.5" height="839" fill="#5a6f94" opacity="0.55"/>
<rect x="10" y="282.3" width="509" height="20.7" fill="#4d6082"/>
<text transform="translate(14 297.4) scale(1 1.1)" font-size="11.82" fill="#ffffff" textLength="87" lengthAdjust="spacing">Solution Explorer</text>
<path d="M472.500 291h6.500l-3.250 3.500z" fill="#dfe4ee" />
<path d="M489.500 288.500h5M490.500 288.500v5.500M493.500 288.500v5.500M488.500 294h7M492 294v4" fill="none" stroke="#dfe4ee" stroke-width="1.1" />
<path d="M504 288.500l8 8M512 288.500l-8 8" fill="none" stroke="#dfe4ee" stroke-width="1.4" />
<rect x="10" y="303" width="509" height="27.5" fill="#cfd6e5" shape-rendering="crispEdges"/>
<circle cx="24.2" cy="317" r="5.5" fill="#b9c0cd"/>
<path d="M27.500 317h-6M24 314l-3 3 3 3" fill="none" stroke="#dfe3ec" stroke-width="1.5" />
<circle cx="45.7" cy="317" r="5.5" fill="#b9c0cd"/>
<path d="M42.500 317h6M46 314l3 3-3 3" fill="none" stroke="#dfe3ec" stroke-width="1.5" />
<path d="M60.500 317.5l6.300-6.500 6.300 6.500M62.500 316v6.500h8.500v-6.500M70 312v-1.500" fill="none" stroke="#1b1b1b" stroke-width="1.4" />
<rect x="65.5" y="318.5" width="2.8" height="4" fill="#1b1b1b"/>
<path d="M86 310.5h4l1 1.500h5v7.500h-5" fill=" #e8c070" stroke="#c9962e" stroke-width="0.8" />
<rect x="82.8" y="316" width="9" height="6.5" fill="#cfd6e5" stroke="#1b1b1b" stroke-width="1.2"/>
<rect x="82.8" y="315.5" width="9" height="2" fill="#1b1b1b"/>
<path d="M84 313c1-2.500 3-3 5-2M93 321c1 2 2.500 2.500 3.500 1" fill="none" stroke="#0b5cad" stroke-width="1.3" />
<path d="M102.800 316.5h6l-3 3.500z" fill="#1b1b1b" />
<rect x="114.7" y="307" width="1.6" height="20" fill="#a9b0c2"/>
<circle cx="132.5" cy="318.5" r="4.6" fill="none" stroke="#1b1b1b" stroke-width="1.3"/>
<path d="M132.500 316v3h2.500" fill="none" stroke="#1b1b1b" stroke-width="1.1" />
<path d="M125 310h5l-2.500 3z" fill="#1b1b1b" />
<path d="M144.400 316.5h6l-3 3.500z" fill="#1b1b1b" />
<path d="M163.500 314v-2.500h6.500v6.500h-2M161.500 316v-2h6.500v6.500h-2" fill="none" stroke="#1b1b1b" stroke-width="1.1" />
<rect x="159.5" y="316" width="6.5" height="6.5" fill="#cfd6e5" stroke="#1b1b1b" stroke-width="1.1"/>
<path d="M161 319.3h3.500" fill="none" stroke="#0b5cad" stroke-width="1.3" />
<rect x="177.7" y="307" width="1.6" height="20" fill="#a9b0c2"/>
<path d="M186.95 322.55L193.47 316.03" stroke="#1b1b1b" stroke-width="2.90" stroke-linecap="round" fill="none"/>
<circle cx="195.65" cy="313.85" r="4.35" fill="#1b1b1b"/>
<rect x="-1.59" y="-5.65" width="3.19" height="5.65" fill="#cfd6e5" transform="translate(196.17 313.33) rotate(45)"/>
<path d="M207.500 318.5h6" fill="none" stroke="#1b1b1b" stroke-width="1.2" />
<rect x="213" y="316.5" width="8" height="3" fill="#1b1b1b"/>
<rect x="10" y="330.5" width="509" height="20" fill="#cfd6e5" shape-rendering="crispEdges"/>
<rect x="10.5" y="331.5" width="507.5" height="18.5" fill="#ffffff" stroke="#e2e6f0" stroke-width="1" shape-rendering="crispEdges"/>
<text transform="translate(14.8 345) scale(1 1.11)" font-size="11.71" fill="#6e6e78" textLength="163.2" lengthAdjust="spacing">Search Solution Explorer (Ctrl+;)</text>
<circle cx="499.5" cy="338.5" r="3" fill="none" stroke="#3c4558" stroke-width="1.4"/>
<path d="M497.300 340.800l-4.500 4.500" fill="none" stroke="#3c4558" stroke-width="1.8" />
<path d="M508.800 339.500h5l-2.500 3z" fill="#3c4558" />
<rect x="10" y="350.5" width="509" height="770.5" fill="#ffffff" shape-rendering="crispEdges"/>
<rect x="10" y="425" width="509" height="17.5" fill="#ccced9" shape-rendering="crispEdges"/>
<text transform="translate(42.0 368.2) scale(1 1.12)" font-size="11.61" fill="#1c1c26" textLength="248.3" lengthAdjust="spacing">Solution 'TwinCAT Project as a server' (2 projects)</text>
<g transform="translate(21.5,355.0)">
<path d="M2.500 3v5M2.500 3.500h13v10.500h-4.500" fill="none" stroke="#2b2b2b" stroke-width="1" />
<rect x="2" y="2.5" width="14" height="2" fill="#2b2b2b"/>
<path d="M2 9.500l2.500 2.200-2.500 2.200zM9.500 7.500v8.500l-1.800 0.500-3.800-4.800 3.800-4.700zM7.300 10l-2 1.800 2 1.800z" fill="#68217a" stroke="#68217a" stroke-width="0.3" fill-rule="evenodd"/>
</g>
<text transform="translate(59.5 385.6) scale(1 1.103)" font-size="11.79" fill="#1c1c26" textLength="190.6" lengthAdjust="spacing">Empty TwinCAT Connectivity Project1</text>
<path d="M25.5 378.9v5.500h-5.500z" fill="#1b1b1b" />
<g transform="translate(39.0,373.4)">
<rect x="0.5" y="0.5" width="15" height="15" fill="#a8436c" stroke="#7e1f45" stroke-width="1"/>
<rect x="1.5" y="1.5" width="13" height="5" fill="#c4638a" opacity="0.5"/>
<path d="M8 3v3M4 9.500v-2h8v2M8 6v3.500" fill="none" stroke="#fff" stroke-width="1" />
<rect x="6.5" y="2" width="3" height="2.8" fill="none" stroke="#fff" stroke-width="0.9"/>
<rect x="2.5" y="9.5" width="3" height="3" fill="none" stroke="#fff" stroke-width="0.9"/>
<rect x="6.5" y="9.5" width="3" height="3" fill="none" stroke="#fff" stroke-width="0.9"/>
<rect x="10.5" y="9.5" width="3" height="3" fill="none" stroke="#fff" stroke-width="0.9"/>
</g>
<text transform="translate(76.9 403.1) scale(1 1.149)" font-size="11.31" fill="#1c1c26" textLength="166" lengthAdjust="spacing">TwinCAT OPC UA Server Project1</text>
<path d="M42.9 396.4v5.500h-5.500z" fill="#1b1b1b" />
<g transform="translate(56.4,390.9)">
<rect x="0.5" y="0.5" width="15" height="15" fill="#9c1f7a" stroke="#7d1562" stroke-width="1"/>
<path d="M1 15l14-14v14z" fill="#7d1562" />
<rect x="3" y="3" width="3" height="1" fill="#e9b7dc"/>
<rect x="5" y="8" width="6" height="1" fill="#e9b7dc" opacity="0.6"/>
</g>
<text transform="translate(94.3 420.6) scale(1 1.164)" font-size="11.17" fill="#1c1c26" textLength="60" lengthAdjust="spacing">Data Access</text>
<path d="M60.3 413.9v5.500h-5.500z" fill="#1b1b1b" />
<g transform="translate(73.8,408.4)">
<rect x="0.5" y="0.5" width="15" height="15" fill="#9a2f59" stroke="#7e1f45" stroke-width="1"/>
<rect x="1" y="1" width="14" height="7" fill="#c77a98" opacity="0.6"/>
<rect x="1" y="12" width="14" height="3" fill="#7a1a40" opacity="0.6"/>
<text x="8" y="12" font-size="10.5" fill="#f3dde6" font-weight="bold" text-anchor="middle" textLength="13.500" lengthAdjust="spacingAndGlyphs">DA</text>
</g>
<text transform="translate(111.8 438.0) scale(1 1.19)" font-size="10.92" fill="#1c1c26" textLength="25" lengthAdjust="spacing">PLC1</text>
<g transform="translate(91.3,425.8)">
<rect x="0.5" y="0.5" width="15" height="15" fill="#8e1d4a" stroke="#6d1237" stroke-width="1"/>
<rect x="1" y="1" width="3" height="14" fill="#e8e8ee"/>
<path d="M6 5h7M10.500 2.500l2.500 2.500-2.500 2.500" fill="none" stroke="#111" stroke-width="1.4" />
<path d="M13 11h-7M8.500 8.500l-2.500 2.500 2.500 2.500" fill="none" stroke="#fff" stroke-width="1.4" />
</g>
<text transform="translate(94.3 455.4) scale(1 1.127)" font-size="11.54" fill="#1c1c26" textLength="66.3" lengthAdjust="spacing">Event Logger</text>
<g transform="translate(73.8,443.2)">
<rect x="0.5" y="0.5" width="15" height="15" fill="#9a2f59" stroke="#7e1f45" stroke-width="1"/>
<rect x="1" y="1" width="14" height="7" fill="#c77a98" opacity="0.6"/>
<rect x="1" y="12" width="14" height="3" fill="#7a1a40" opacity="0.6"/>
<text x="8" y="12" font-size="10.5" fill="#f3dde6" font-weight="bold" text-anchor="middle" textLength="13.500" lengthAdjust="spacingAndGlyphs">EL</text>
</g>
<text transform="translate(94.3 472.9) scale(1 1.109)" font-size="11.72" fill="#1c1c26" textLength="85.6" lengthAdjust="spacing">Historical Access</text>
<g transform="translate(73.8,460.7)">
<rect x="0.5" y="0.5" width="15" height="15" fill="#9a2f59" stroke="#7e1f45" stroke-width="1"/>
<rect x="1" y="1" width="14" height="7" fill="#c77a98" opacity="0.6"/>
<rect x="1" y="12" width="14" height="3" fill="#7a1a40" opacity="0.6"/>
<text x="8" y="12" font-size="10.5" fill="#f3dde6" font-weight="bold" text-anchor="middle" textLength="13.500" lengthAdjust="spacingAndGlyphs">HA</text>
</g>
<text transform="translate(94.3 490.3) scale(1 1.082)" font-size="12.01" fill="#1c1c26" textLength="116.7" lengthAdjust="spacing">Alarms and Conditions</text>
<g transform="translate(73.8,478.1)">
<rect x="0.5" y="0.5" width="15" height="15" fill="#9a2f59" stroke="#7e1f45" stroke-width="1"/>
<rect x="1" y="1" width="14" height="7" fill="#c77a98" opacity="0.6"/>
<rect x="1" y="12" width="14" height="3" fill="#7a1a40" opacity="0.6"/>
<text x="8" y="12" font-size="10.5" fill="#f3dde6" font-weight="bold" text-anchor="middle" textLength="13.500" lengthAdjust="spacingAndGlyphs">AC</text>
</g>
<text transform="translate(94.3 507.8) scale(1 1.136)" font-size="11.44" fill="#1c1c26" textLength="78" lengthAdjust="spacing">Security Access</text>
<path d="M56.3 499.6l4 4-4 4z" fill="#fff" stroke="#1b1b1b" stroke-width="1" />
<g transform="translate(73.8,495.6)">
<rect x="0.5" y="0.5" width="15" height="15" fill="#9a2f59" stroke="#7e1f45" stroke-width="1"/>
<rect x="1" y="1" width="14" height="7" fill="#c77a98" opacity="0.6"/>
<rect x="1" y="12" width="14" height="3" fill="#7a1a40" opacity="0.6"/>
<text x="8" y="12" font-size="10.5" fill="#f3dde6" font-weight="bold" text-anchor="middle" textLength="13.500" lengthAdjust="spacingAndGlyphs">SC</text>
</g>
<text transform="translate(94.3 525.2) scale(1 1.184)" font-size="10.98" fill="#1c1c26" textLength="50.7" lengthAdjust="spacing">Resources</text>
<g transform="translate(73.8,513.0)">
<rect x="0.5" y="0.5" width="15" height="15" fill="#9a2f59" stroke="#7e1f45" stroke-width="1"/>
<rect x="1" y="1" width="14" height="7" fill="#c77a98" opacity="0.6"/>
<rect x="1" y="12" width="14" height="3" fill="#7a1a40" opacity="0.6"/>
<text x="8" y="12" font-size="10.5" fill="#f3dde6" font-weight="bold" text-anchor="middle" textLength="13.500" lengthAdjust="spacingAndGlyphs">RS</text>
</g>
<text transform="translate(59.5 542.7) scale(1 1.149)" font-size="11.31" fill="#1c1c26" textLength="137.5" lengthAdjust="spacing">TwinCAT Project as a server</text>
<path d="M25.5 536.0v5.500h-5.500z" fill="#1b1b1b" />
<g transform="translate(39.0,530.5)">
<rect x="1.5" y="0.5" width="14" height="14.5" fill="url(#gold)" stroke="#c79a14" stroke-width="0.6"/>
<rect x="0" y="8.5" width="7" height="7" fill="#d62a1f"/>
<rect x="1.5" y="11" width="4" height="3" fill="#f3b0a8"/>
</g>
<text transform="translate(76.9 560.2) scale(1 1.19)" font-size="10.92" fill="#1c1c26" textLength="40.5" lengthAdjust="spacing">SYSTEM</text>
<path d="M42.9 553.5v5.500h-5.500z" fill="#1b1b1b" />
<g transform="translate(56.4,548.0)">
<rect x="0.5" y="0.5" width="15" height="15" fill="url(#gold)" stroke="#c79a14" stroke-width="0.6"/>
<circle cx="8" cy="8" r="4.3" fill="none" stroke="#b07c06" stroke-width="1.4"/>
<path d="M8 3.500v9M5 8h3" fill="none" stroke="#b07c06" stroke-width="1" />
</g>
<text transform="translate(94.3 577.6) scale(1 1.155)" font-size="11.26" fill="#1c1c26" textLength="37.5" lengthAdjust="spacing">License</text>
<g transform="translate(73.8,565.4)">
<rect x="1.5" y="1.5" width="12" height="13" fill="#dbe9f7" stroke="#6fa3d4" stroke-width="1"/>
<path d="M4 5h6M4 8h6M4 11h4" fill="none" stroke="#8fb8df" stroke-width="1" />
<path d="M9.500 0.500h4v8l-2-1.500-2 1.500z" fill="#e8862a" />
</g>
<text transform="translate(94.3 595.1) scale(1 1.127)" font-size="11.54" fill="#1c1c26" textLength="51" lengthAdjust="spacing">Real-Time</text>
<path d="M60.3 588.4v5.500h-5.500z" fill="#1b1b1b" />
<g transform="translate(73.8,582.9)">
<path d="M8 0.500l6.500 3.700v7.600l-6.500 3.700-6.500-3.700v-7.600z" fill="#e3b11c" stroke="#b98a08" stroke-width="0.8" />
<circle cx="8" cy="8" r="2.5" fill="#f6dd7a"/>
</g>
<text transform="translate(111.8 612.5) scale(1 1.123)" font-size="11.58" fill="#1c1c26" textLength="62" lengthAdjust="spacing">I/O Idle Task</text>
<g transform="translate(91.3,600.3)">
<path d="M2.500 1.500h8l3 3v10h-11z" fill="#fff" stroke="#1565c0" stroke-width="1.2" />
<rect x="6" y="7.5" width="7" height="5" fill="#5f9fe0" stroke="#1565c0" stroke-width="0.8"/>
<path d="M8 5v6M6 7l2-2 2 2" fill="none" stroke="#1565c0" stroke-width="1.1" />
</g>
<text transform="translate(94.3 630.0) scale(1 1.19)" font-size="10.92" fill="#1c1c26" textLength="25.8" lengthAdjust="spacing">Tasks</text>
<path d="M56.3 621.8l4 4-4 4z" fill="#fff" stroke="#1b1b1b" stroke-width="1" />
<g transform="translate(73.8,617.8)">
<path d="M4.500 4.500h7l2.500 2.500v8h-9.500z" fill="#fff" stroke="#1565c0" stroke-width="1.1" />
<path d="M6.500 8h5M6.500 10.500h5M6.500 13h5" fill="none" stroke="#1565c0" stroke-width="1" />
<path d="M2.500 12.500v-10h7" fill="none" stroke="#1565c0" stroke-width="1.1" />
<circle cx="3" cy="3" r="2.5" fill="#4caf50"/>
</g>
<text transform="translate(94.3 647.4) scale(1 1.17)" font-size="11.11" fill="#1c1c26" textLength="34" lengthAdjust="spacing">Routes</text>
<g transform="translate(73.8,635.2)">
<rect x="1" y="3" width="4.5" height="3.5" fill="#9aa4b5" stroke="#5f6b80" stroke-width="0.8"/>
<rect x="1" y="10" width="4.5" height="3.5" fill="#9aa4b5" stroke="#5f6b80" stroke-width="0.8"/>
<rect x="10.5" y="6.5" width="4.5" height="3.5" fill="#9aa4b5" stroke="#5f6b80" stroke-width="0.8"/>
<rect x="10.5" y="11.5" width="4.5" height="3.5" fill="#9aa4b5" stroke="#5f6b80" stroke-width="0.8"/>
<path d="M5.500 4.500h3v8.500h2M5.500 11.500h3M8.500 8h2" fill="none" stroke="#5f6b80" stroke-width="1" />
</g>
<text transform="translate(94.3 664.9) scale(1 1.162)" font-size="11.19" fill="#1c1c26" textLength="62.5" lengthAdjust="spacing">Type System</text>
<g transform="translate(73.8,652.6)">
<rect x="1" y="0.5" width="5" height="5" fill="#3a53c5"/>
<rect x="9.5" y="1.5" width="5.5" height="5" fill="#3a53c5"/>
<rect x="9.5" y="9.5" width="5.5" height="5" fill="#3a53c5"/>
<path d="M3.500 5.500v7.500h6M3.500 4h6" fill="none" stroke="#555" stroke-width="1" />
<circle cx="3.5" cy="12.5" r="2.2" fill="#8ea2b8" stroke="#555" stroke-width="0.7"/>
</g>
<text transform="translate(94.3 682.3) scale(1 1.11)" font-size="11.71" fill="#1c1c26" textLength="79.2" lengthAdjust="spacing">TcCOM Objects</text>
<g transform="translate(73.8,670.1)">
<rect x="0.5" y="0.5" width="15" height="15" fill="#c9ccd6" stroke="#555d70" stroke-width="1"/>
<path d="M3 2.500h10v3l-2 2v5.500h-6v-5.500l-2-2z" fill="#b02a4a" stroke="#7e1f35" stroke-width="0.8" />
</g>
<text transform="translate(76.9 699.8) scale(1 1.141)" font-size="11.39" fill="#1c1c26" textLength="44" lengthAdjust="spacing">MOTION</text>
<g transform="translate(56.4,687.5)">
<rect x="0.5" y="0.5" width="15" height="15" fill="#d9dbe0" stroke="#8a8f99" stroke-width="1"/>
<path d="M3 11c0-3 2-5 5-5s5 2 5 5z" fill="none" stroke="#6b7078" stroke-width="1.2" />
<path d="M4 6l1.500 1.500M8 4v2M12 6l-1.500 1.500" fill="none" stroke="#6b7078" stroke-width="1" />
<rect x="2.5" y="11" width="11" height="1.5" fill="#6b7078"/>
</g>
<text transform="translate(76.9 717.2) scale(1 1.19)" font-size="10.92" fill="#1c1c26" textLength="19.4" lengthAdjust="spacing">PLC</text>
<path d="M42.9 710.5v5.500h-5.500z" fill="#1b1b1b" />
<g transform="translate(56.4,705.0)">
<rect x="0.5" y="0.5" width="15" height="15" fill="#ef8f2a" stroke="#c46a12" stroke-width="1"/>
<rect x="3" y="3" width="4" height="10" fill="none" stroke="#fff2dd" stroke-width="1.1"/>
<rect x="9" y="3" width="4" height="10" fill="none" stroke="#fff2dd" stroke-width="1.1"/>
<path d="M5 5v3M11 5v3" fill="none" stroke="#fff2dd" stroke-width="1" />
</g>
<text transform="translate(94.3 734.7) scale(1 1.082)" font-size="12.01" fill="#1c1c26" textLength="45.8" lengthAdjust="spacing">Untitled1</text>
<path d="M60.3 728.0v5.500h-5.500z" fill="#1b1b1b" />
<g transform="translate(73.8,722.5)">
<rect x="0.5" y="0.5" width="15" height="15" fill="#ef8f2a" stroke="#c46a12" stroke-width="1"/>
<rect x="2.5" y="3" width="4" height="10" fill="none" stroke="#fff2dd" stroke-width="1.1"/>
<rect x="8.5" y="2.5" width="5" height="11" fill="#d6261f"/>
</g>
<text transform="translate(111.8 752.1) scale(1 1.087)" font-size="11.96" fill="#1c1c26" textLength="84.8" lengthAdjust="spacing">Untitled1 Project</text>
<path d="M77.8 745.4v5.500h-5.500z" fill="#1b1b1b" />
<g transform="translate(91.3,739.9)">
<rect x="2.5" y="2.5" width="12" height="12" fill="#f1f3f7" stroke="#4a5264" stroke-width="1.1"/>
<rect x="2.5" y="2.5" width="12" height="2.5" fill="#4a5264"/>
<path d="M7.500 8h5M7.500 10.500h5M5 13h7.500" fill="none" stroke="#4a5264" stroke-width="1.1" />
<path d="M4.500 0.500h1.500M8 0.500h1.500M11.500 0.500h1.500" fill="none" stroke="#e8862a" stroke-width="1.2" />
<rect x="0.5" y="9.5" width="6" height="6" fill="#1b1b1b"/>
<rect x="2" y="11.5" width="3" height="2.5" fill="#e8e8e8"/>
</g>
<text transform="translate(129.2 769.5) scale(1 1.162)" font-size="11.19" fill="#1c1c26" textLength="71.3" lengthAdjust="spacing">External Types</text>
<g transform="translate(108.8,757.3)">
<path d="M1 3.500h5l1.500 1.500h7.500v9.500h-14z" fill="#f0cf62" stroke="#c99a2a" stroke-width="0.9" />
<rect x="1.5" y="6" width="13" height="1.2" fill="#f9e8a8"/>
</g>
<text transform="translate(129.2 787.0) scale(1 1.168)" font-size="11.13" fill="#1c1c26" textLength="55" lengthAdjust="spacing">References</text>
<path d="M91.2 778.8l4 4-4 4z" fill="#fff" stroke="#1b1b1b" stroke-width="1" />
<g transform="translate(108.8,774.8)">
<path d="M1 3.500h5l1.500 1.500h7.500v9.500h-14z" fill="#e6e8ec" stroke="#8a8f99" stroke-width="0.9" />
<rect x="5" y="7.5" width="8" height="4.5" fill="#bfc5cf" stroke="#6b7078" stroke-width="0.8"/>
<rect x="7" y="9" width="4" height="1.5" fill="#59b0c8"/>
</g>
<text transform="translate(129.2 804.5) scale(1 1.19)" font-size="10.92" fill="#1c1c26" textLength="24.4" lengthAdjust="spacing">DUTs</text>
<g transform="translate(108.8,792.2)">
<path d="M1 3.500h5l1.500 1.500h7.500v9.500h-14z" fill="#f0cf62" stroke="#c99a2a" stroke-width="0.9" />
<rect x="1.5" y="6" width="13" height="1.2" fill="#f9e8a8"/>
</g>
<text transform="translate(129.2 821.9) scale(1 1.19)" font-size="10.92" fill="#1c1c26" textLength="24.4" lengthAdjust="spacing">GVLs</text>
<path d="M95.2 815.2v5.500h-5.500z" fill="#1b1b1b" />
<g transform="translate(108.8,809.7)">
<path d="M1 14v-10.500h5l1.500 1.500h6v2.500" fill="#f3d56c" stroke="#c99a2a" stroke-width="0.9" />
<path d="M1 14l3-6.500h11.500l-3 6.500z" fill="#f8e49a" stroke="#c99a2a" stroke-width="0.9" />
</g>
<text transform="translate(146.7 839.4) scale(1 1.175)" font-size="11.06" fill="#1c1c26" textLength="38" lengthAdjust="spacing">OPCUA</text>
<g transform="translate(126.2,827.1)">
<circle cx="9" cy="7.5" r="6.8" fill="#2f7fd1" stroke="#1b5aa0" stroke-width="0.7"/>
<path d="M5 3.500c2 0.500 3 2 2.500 4-0.500 1.500-2.500 1.500-3 3M10 1.500c1 1.500 3 1.500 3.500 3.500 0.500 2-1.500 3-1 5" fill="none" stroke="#5dc45a" stroke-width="2" />
<path d="M12 3a7 7 0 0 1 0 9" fill="none" stroke="#d5e9fb" stroke-width="1" />
<rect x="0.5" y="9.5" width="6" height="6" fill="#d62a1f"/>
<rect x="2" y="11.5" width="3" height="2.5" fill="#f8c9c4"/>
</g>
<text transform="translate(129.2 856.8) scale(1 1.19)" font-size="10.92" fill="#1c1c26" textLength="27.6" lengthAdjust="spacing">POUs</text>
<path d="M95.2 850.1v5.500h-5.500z" fill="#1b1b1b" />
<g transform="translate(108.8,844.6)">
<path d="M1 14v-10.500h5l1.500 1.500h6v2.500" fill="#f3d56c" stroke="#c99a2a" stroke-width="0.9" />
<path d="M1 14l3-6.500h11.500l-3 6.500z" fill="#f8e49a" stroke="#c99a2a" stroke-width="0.9" />
</g>
<text transform="translate(146.7 874.2) scale(1 1.144)" font-size="11.36" fill="#1c1c26" textLength="61.6" lengthAdjust="spacing">MAIN (PRG)</text>
<g transform="translate(126.2,862.0)">
<path d="M4.500 1.500h8l2 2v11.500h-10z" fill="#fff" stroke="#4a5264" stroke-width="1.1" />
<path d="M7 5h5.500M7 7.500h5.500M7 10h5.500M7 12.500h4" fill="none" stroke="#3a53c5" stroke-width="1.1" />
<rect x="0.5" y="9.5" width="6" height="6" fill="#1b1b1b"/>
<rect x="2" y="11.5" width="3" height="2.5" fill="#e8e8e8"/>
</g>
<text transform="translate(129.2 891.7) scale(1 1.19)" font-size="10.92" fill="#1c1c26" textLength="27.6" lengthAdjust="spacing">VISUs</text>
<g transform="translate(108.8,879.5)">
<path d="M1 3.500h5l1.500 1.500h7.500v9.500h-14z" fill="#f0cf62" stroke="#c99a2a" stroke-width="0.9" />
<rect x="1.5" y="6" width="13" height="1.2" fill="#f9e8a8"/>
</g>
<text transform="translate(129.2 909.1) scale(1 1.178)" font-size="11.04" fill="#1c1c26" textLength="83.6" lengthAdjust="spacing">PlcTask (PlcTask)</text>
<path d="M91.2 900.9l4 4-4 4z" fill="#fff" stroke="#1b1b1b" stroke-width="1" />
<g transform="translate(108.8,896.9)">
<path d="M6.500 3.500h6l2.500 2.500v8.500h-8.500z" fill="#fff" stroke="#1565c0" stroke-width="1.1" />
<path d="M8.500 8h4.500M8.500 10.500h4.500" fill="none" stroke="#1565c0" stroke-width="1" />
<path d="M3.500 9v-7.500h7" fill="none" stroke="#1565c0" stroke-width="1.1" />
<rect x="0.5" y="9.5" width="6" height="6" fill="#1b1b1b"/>
<rect x="2" y="11.5" width="3" height="2.5" fill="#e8e8e8"/>
</g>
<text transform="translate(129.2 926.6) scale(1 1.062)" font-size="12.24" fill="#1c1c26" textLength="69" lengthAdjust="spacing">Untitled1.tmc</text>
<g transform="translate(108.8,914.4)">
<rect x="1" y="1" width="5.5" height="5.5" fill="#8a9384"/>
<rect x="9.5" y="1.5" width="5.5" height="5" fill="#5fb043"/>
<rect x="9.5" y="9.5" width="5.5" height="5.5" fill="#5fb043"/>
<path d="M4 6.500v6h5.500M6.500 4h3" fill="none" stroke="#555" stroke-width="1" />
<circle cx="3.5" cy="12" r="2.2" fill="#9aa4a0" stroke="#555" stroke-width="0.7"/>
</g>
<text transform="translate(111.8 944.1) scale(1 1.092)" font-size="11.9" fill="#1c1c26" textLength="92" lengthAdjust="spacing">Untitled1 Instance</text>
<g transform="translate(91.3,931.9)">
<rect x="1" y="2.5" width="5" height="10" fill="none" stroke="#d65a1f" stroke-width="1.2"/>
<rect x="7.5" y="2" width="6" height="11.5" fill="#d6261f"/>
<path d="M6 4.500h1.500M6 8h1.500M6 11.500h1.500M13.500 4.500h2M13.500 8h2M13.500 11.500h2" fill="none" stroke="#d6261f" stroke-width="1.2" />
<rect x="2.5" y="5" width="2" height="4" fill="#e8862a"/>
</g>
<text transform="translate(76.9 961.5) scale(1 1.19)" font-size="10.92" fill="#1c1c26" textLength="37.4" lengthAdjust="spacing">SAFETY</text>
<g transform="translate(56.4,949.3)">
<rect x="0.5" y="0.5" width="15" height="15" fill="#ffd21f" stroke="#d9a900" stroke-width="1"/>
<path d="M8 2.500c-3 1-4 3-2.500 5.500-1.500 2.500-0.500 4.500 2.500 5.500M8 2.500c3 1 4 3 2.500 5.500 1.500 2.500 0.500 4.500-2.500 5.500M8 6v4.500" fill="none" stroke="#e09a00" stroke-width="1.1" />
</g>
<text transform="translate(76.9 979.0) scale(1 1.099)" font-size="11.83" fill="#1c1c26" textLength="21.6" lengthAdjust="spacing">C++</text>
<g transform="translate(56.4,966.8)">
<rect x="0.5" y="0.5" width="15" height="15" fill="#7dbb6a" stroke="#3f7d31" stroke-width="1"/>
<path d="M7 3.500c-4-1-5 5-1 5M6 6v8M8.500 11.500h3M10 10v3M12 12.500h3M13.500 11v3" fill="none" stroke="#1f5a16" stroke-width="1.1" />
</g>
<text transform="translate(76.9 996.4) scale(1 1.19)" font-size="10.92" fill="#1c1c26" textLength="35.7" lengthAdjust="spacing">VISION</text>
<g transform="translate(56.4,984.2)">
<rect x="0.5" y="0.5" width="15" height="15" fill="#a9c3cf" stroke="#5c7f8f" stroke-width="1"/>
<path d="M2.500 7c3-4 8-4 11 0-3 4-8 4-11 0z" fill="none" stroke="#4d6f80" stroke-width="1" />
<circle cx="8" cy="7" r="1.8" fill="none" stroke="#4d6f80" stroke-width="1"/>
</g>
<text transform="translate(76.9 1013.9) scale(1 1.183)" font-size="10.99" fill="#1c1c26" textLength="58.2" lengthAdjust="spacing">ANALYTICS</text>
<g transform="translate(56.4,1001.6)">
<rect x="0.5" y="0.5" width="15" height="15" fill="#5a78c8" stroke="#32499a" stroke-width="1"/>
<circle cx="8" cy="8.5" r="3.8" fill="none" stroke="#1f2f6b" stroke-width="1.2"/>
<path d="M2.500 13l10.500-10.500M4 10c2-3 5-2 8 2" fill="none" stroke="#1f2f6b" stroke-width="1.1" />
</g>
<text transform="translate(76.9 1031.3) scale(1 1.088)" font-size="11.95" fill="#1c1c26" textLength="15.4" lengthAdjust="spacing">I/O</text>
<path d="M42.9 1024.6v5.500h-5.500z" fill="#1b1b1b" />
<g transform="translate(56.4,1019.1)">
<rect x="0.5" y="0.5" width="15" height="15" fill="url(#gold)" stroke="#c79a14" stroke-width="0.6"/>
<path d="M3.500 3.500h9.500v2.500h-4.500l-2 4h5.500v2.500h-9.500v-2.500h2l2-4h-3z" fill="#e8c65a" stroke="#a87c08" stroke-width="0.9" />
</g>
<text transform="translate(94.3 1048.8) scale(1 1.161)" font-size="11.2" fill="#1c1c26" textLength="38.5" lengthAdjust="spacing">Devices</text>
<g transform="translate(73.8,1036.5)">
<rect x="5.5" y="2.5" width="6" height="4" fill="#b9bec8" stroke="#6b7078" stroke-width="0.9"/>
<rect x="9" y="10.5" width="6" height="4" fill="#b9bec8" stroke="#6b7078" stroke-width="0.9"/>
<path d="M8.500 6.500v6h1" fill="none" stroke="#6b7078" stroke-width="1" />
<path d="M0.500 3h5M3 0.500v5" fill="none" stroke="#3fae3a" stroke-width="1.8" />
</g>
<text transform="translate(94.3 1066.2) scale(1 1.064)" font-size="12.22" fill="#1c1c26" textLength="51.2" lengthAdjust="spacing">Mappings</text>
<g transform="translate(73.8,1054.0)">
<rect x="0.5" y="9" width="6.5" height="6.5" fill="#d63a4a" stroke="#a81f30" stroke-width="0.7"/>
<rect x="9" y="9" width="6.5" height="6.5" fill="#f3d84a" stroke="#c9a81a" stroke-width="0.7"/>
<path d="M0.500 3h5M3 0.500v5" fill="none" stroke="#3fae3a" stroke-width="1.8" />
<path d="M6.500 3.500h5M10 0.500l3.500 3-3.500 3z" fill="#f0502a" stroke="#f0502a" stroke-width="1.2" />
</g>
<rect x="525.5" y="282.4" width="184.5" height="18.1" fill="#364e6f"/>
<rect x="710" y="282.4" width="89.5" height="18.1" fill="#4d6082"/>
<rect x="799.5" y="282.4" width="292.5" height="18.1" fill="#364e6f"/>
<rect x="525.5" y="300.4" width="974" height="1.8" fill="#364e6f"/>
<rect x="710" y="300.4" width="89.5" height="1.8" fill="#4d6082"/>
<text transform="translate(530.3 296.7) scale(1 1.147)" font-size="11.33" fill="#ffffff" textLength="137.7" lengthAdjust="spacing">TwinCAT Project as a server</text>
<text transform="translate(714.4 296.7) scale(1 1.136)" font-size="11.44" fill="#ffffff" textLength="43.6" lengthAdjust="spacing">OPCUA*</text>
<path d="M768.500 292h3M770 290v4M771.500 290.500v3h3.500v-3zM775 292h1.500" fill="none" stroke="#e4e8f0" stroke-width="1" />
<path d="M786 288.500l7.500 7.500M793.500 288.500l-7.500 7.500" fill="none" stroke="#f0f3f8" stroke-width="1.4" />
<text transform="translate(805 296.7) scale(1 1.151)" font-size="11.29" fill="#ffffff" textLength="165.7" lengthAdjust="spacing">TwinCAT OPC UA Server Project1</text>
<text transform="translate(1019.4 296.7) scale(1 1.047)" font-size="12.42" fill="#ffffff" textLength="30" lengthAdjust="spacing">MAIN</text>
<path d="M1490.500 291h6.500l-3.250 3.500z" fill="#dfe4ee" />
<rect x="526" y="302" width="955" height="484" fill="#ffffff" shape-rendering="crispEdges"/>
<rect x="573.5" y="302" width="16.5" height="484" fill="#f2f2f2" shape-rendering="crispEdges"/>
<rect x="572.3" y="302" width="1.5" height="484" fill="#c2c2c2"/>
<rect x="1477" y="302" width="22.3" height="484" fill="url(#olive)"/>
<text x="570.8" y="313.09999999999997" font-size="10.3" fill="#5b9cba" class="m" text-anchor="end">1</text>
<text x="594.8" y="313.7" font-size="11.2" fill="#000" class="m" textLength="188.2" lengthAdjust="spacing"><tspan fill="#a6a6a6">{attribute 'qualified_only'}</tspan></text>
<text x="570.8" y="329.59999999999997" font-size="10.3" fill="#5b9cba" class="m" text-anchor="end">2</text>
<text x="594.8" y="330.2" font-size="11.2" fill="#000" class="m" textLength="67.2" lengthAdjust="spacing"><tspan fill="#2222d8">VAR_GLOBAL</tspan></text>
<text x="570.8" y="346.0" font-size="10.3" fill="#5b9cba" class="m" text-anchor="end">3</text>
<text x="570.8" y="362.5" font-size="10.3" fill="#5b9cba" class="m" text-anchor="end">4</text>
<text x="594.8" y="363.1" font-size="11.2" fill="#000" class="m" textLength="201.6" lengthAdjust="spacing"><tspan fill="#a6a6a6">{attribute 'OPC.UA.DA' := '1'}</tspan></text>
<text x="570.8" y="378.9" font-size="10.3" fill="#5b9cba" class="m" text-anchor="end">5</text>
<text x="570.8" y="395.4" font-size="10.3" fill="#5b9cba" class="m" text-anchor="end">6</text>
<text x="594.8" y="396.0" font-size="11.2" fill="#000" class="m" textLength="188.2" lengthAdjust="spacing"><tspan fill="#262626">bArray</tspan><tspan fill="#2222d8">:ARRAY[</tspan><tspan fill="#a3a33a">0</tspan><tspan fill="#2222d8">..</tspan><tspan fill="#a3a33a">99</tspan><tspan fill="#2222d8">] OF BOOL;</tspan></text>
<text x="570.8" y="411.79999999999995" font-size="10.3" fill="#5b9cba" class="m" text-anchor="end">7</text>
<text x="594.8" y="412.4" font-size="11.2" fill="#000" class="m" textLength="188.2" lengthAdjust="spacing"><tspan fill="#262626">i16Array</tspan><tspan fill="#2222d8">:ARRAY[</tspan><tspan fill="#a3a33a">0</tspan><tspan fill="#2222d8">..</tspan><tspan fill="#a3a33a">99</tspan><tspan fill="#2222d8">]OF INT;</tspan></text>
<text x="570.8" y="428.29999999999995" font-size="10.3" fill="#5b9cba" class="m" text-anchor="end">8</text>
<text x="570.8" y="444.7" font-size="10.3" fill="#5b9cba" class="m" text-anchor="end">9</text>
<text x="570.8" y="461.2" font-size="10.3" fill="#5b9cba" class="m" text-anchor="end">10</text>
<text x="594.8" y="461.8" font-size="11.2" fill="#000" class="m" textLength="201.6" lengthAdjust="spacing"><tspan fill="#a6a6a6">{attribute 'OPC.UA.DA' := '1'}</tspan></text>
<text x="570.8" y="477.59999999999997" font-size="10.3" fill="#5b9cba" class="m" text-anchor="end">11</text>
<text x="594.8" y="478.2" font-size="11.2" fill="#000" class="m" textLength="87.4" lengthAdjust="spacing"><tspan fill="#262626">bBOOL1</tspan><tspan fill="#2222d8">: BOOL;</tspan></text>
<text x="570.8" y="494.09999999999997" font-size="10.3" fill="#5b9cba" class="m" text-anchor="end">12</text>
<text x="594.8" y="494.7" font-size="11.2" fill="#000" class="m" textLength="201.6" lengthAdjust="spacing"><tspan fill="#a6a6a6">{attribute 'OPC.UA.DA' := '1'}</tspan></text>
<text x="570.8" y="510.59999999999997" font-size="10.3" fill="#5b9cba" class="m" text-anchor="end">13</text>
<text x="594.8" y="511.2" font-size="11.2" fill="#000" class="m" textLength="87.4" lengthAdjust="spacing"><tspan fill="#262626">bBOOL2</tspan><tspan fill="#2222d8">: BOOL;</tspan></text>
<text x="570.8" y="527.0" font-size="10.3" fill="#5b9cba" class="m" text-anchor="end">14</text>
<text x="594.8" y="527.6" font-size="11.2" fill="#000" class="m" textLength="201.6" lengthAdjust="spacing"><tspan fill="#a6a6a6">{attribute 'OPC.UA.DA' := '1'}</tspan></text>
<text x="570.8" y="543.5" font-size="10.3" fill="#5b9cba" class="m" text-anchor="end">15</text>
<text x="594.8" y="544.1" font-size="11.2" fill="#000" class="m" textLength="87.4" lengthAdjust="spacing"><tspan fill="#262626">bBOOL3</tspan><tspan fill="#2222d8">: BOOL;</tspan></text>
<text x="570.8" y="559.9" font-size="10.3" fill="#5b9cba" class="m" text-anchor="end">16</text>
<text x="570.8" y="576.4" font-size="10.3" fill="#5b9cba" class="m" text-anchor="end">17</text>
<text x="594.8" y="577.0" font-size="11.2" fill="#000" class="m" textLength="201.6" lengthAdjust="spacing"><tspan fill="#a6a6a6">{attribute 'OPC.UA.DA' := '1'}</tspan></text>
<text x="570.8" y="592.8" font-size="10.3" fill="#5b9cba" class="m" text-anchor="end">18</text>
<text x="594.8" y="593.4" font-size="11.2" fill="#000" class="m" textLength="73.9" lengthAdjust="spacing"><tspan fill="#262626">iInt1</tspan><tspan fill="#2222d8">: INT;</tspan></text>
<text x="570.8" y="609.3" font-size="10.3" fill="#5b9cba" class="m" text-anchor="end">19</text>
<text x="594.8" y="609.9" font-size="11.2" fill="#000" class="m" textLength="201.6" lengthAdjust="spacing"><tspan fill="#a6a6a6">{attribute 'OPC.UA.DA' := '1'}</tspan></text>
<text x="570.8" y="625.6999999999999" font-size="10.3" fill="#5b9cba" class="m" text-anchor="end">20</text>
<text x="594.8" y="626.3" font-size="11.2" fill="#000" class="m" textLength="73.9" lengthAdjust="spacing"><tspan fill="#262626">iInt2</tspan><tspan fill="#2222d8">: INT;</tspan></text>
<text x="570.8" y="642.1999999999999" font-size="10.3" fill="#5b9cba" class="m" text-anchor="end">21</text>
<text x="594.8" y="642.8" font-size="11.2" fill="#000" class="m" textLength="201.6" lengthAdjust="spacing"><tspan fill="#a6a6a6">{attribute 'OPC.UA.DA' := '1'}</tspan></text>
<text x="570.8" y="658.6999999999999" font-size="10.3" fill="#c84848" class="m" text-anchor="end">22</text>
<text x="594.8" y="659.3" font-size="11.2" fill="#000" class="m" textLength="73.9" lengthAdjust="spacing"><tspan fill="#262626">iInt3</tspan><tspan fill="#2222d8">: INT;</tspan></text>
<text x="570.8" y="675.1" font-size="10.3" fill="#5b9cba" class="m" text-anchor="end">23</text>
<text x="570.8" y="691.6" font-size="10.3" fill="#5b9cba" class="m" text-anchor="end">24</text>
<text x="594.8" y="692.2" font-size="11.2" fill="#000" class="m" textLength="47.0" lengthAdjust="spacing"><tspan fill="#2222d8">END_VAR</tspan></text>
<rect x="1410.5" y="767.5" width="45.5" height="17.5" fill="#f0f0f0" stroke="#c3c3c3" stroke-width="1" shape-rendering="crispEdges"/>
<text x="1433" y="780.7" font-size="9" fill="#333" text-anchor="middle">100</text>
<rect x="1457.5" y="767.5" width="18.5" height="17.5" fill="#f0f0f0" stroke="#c3c3c3" stroke-width="1" shape-rendering="crispEdges"/>
<path d="M1460.500 771.500h6l2.500 2.500v8.500h-8.500z" fill="#fff" stroke="#333" stroke-width="1" />
<circle cx="1465.5" cy="775.5" r="3.3" fill="#cfe8f3" stroke="#1b1b1b" stroke-width="1.3"/>
<path d="M1468 778l5.500 5" fill="none" stroke="#1b1b1b" stroke-width="2" />
<rect x="1476.7" y="303.7" width="19.7" height="18.7" fill="#e8eaf3" stroke="#7f9cd8" stroke-width="1.2" rx="1"/>
<rect x="1480" y="308.0" width="9" height="1.1" fill="#333"/>
<rect x="1482" y="310.2" width="6" height="1.1" fill="#2e8b2e"/>
<rect x="1480" y="312.4" width="10" height="1.1" fill="#333"/>
<rect x="1482" y="314.6" width="7" height="1.1" fill="#c04040"/>
<rect x="1480" y="316.8" width="9" height="1.1" fill="#333"/>
<rect x="1482" y="319.0" width="6" height="1.1" fill="#2a4fb0"/>
<rect x="1479.5" y="328.5" width="13.5" height="13" fill="#fff" stroke="#333" stroke-width="1" shape-rendering="crispEdges"/>
<rect x="1479.5" y="328.5" width="13.5" height="2.5" fill="#2a2ae6" shape-rendering="crispEdges"/>
<path d="M1479.500 334.500h13.500M1479.500 338h13.500M1484 331v10.500M1488.500 331v10.500" fill="none" stroke="#8a8a8a" stroke-width="0.8" />
<rect x="525.5" y="793.5" width="974" height="20" fill="#4d6082"/>
<text transform="translate(530.7 807.5) scale(1 1.058)" font-size="12.29" fill="#ffffff" textLength="100.3" lengthAdjust="spacing">Command Window</text>
<path d="M1453.500 801.500h6.500l-3.250 3.500z" fill="#dfe4ee" />
<path d="M1470 799h5M1471 799v5.500M1474 799v5.500M1469 804.500h7M1472.500 804.500v4" fill="none" stroke="#dfe4ee" stroke-width="1.1" />
<path d="M1485 799l8 8M1493 799l-8 8" fill="none" stroke="#dfe4ee" stroke-width="1.4" />
<rect x="525.5" y="813.5" width="974" height="307.5" fill="#e6e7e8"/>
<path d="M529.500 818l4.500 3.300-4.500 3.300" fill="none" stroke="#333" stroke-width="1.1" />
<path d="M1487.500 824.500l4-4.300 4 4.300z" fill="#8f939c" />
<rect x="1487" y="830.5" width="9" height="290.5" fill="#c2c3c9" shape-rendering="crispEdges"/>
<defs><clipPath id="cname"><rect x="1521" y="350" width="136.200" height="470"/></clipPath><clipPath id="cdoc"><rect x="0" y="153" width="1855" height="968"/></clipPath></defs>
<g clip-path="url(#cdoc)">
<rect x="1507" y="282.2" width="348" height="21.3" fill="#fff29d"/>
<text transform="translate(1511.6 297.3) scale(1 1.127)" font-size="11.54" fill="#1c1c26" textLength="50.8" lengthAdjust="spacing">Properties</text>
<path d="M1811.500 291h6.500l-3.250 3.500z" fill="#5b5b4a" />
<path d="M1828 288.500h5M1829 288.500v5.500M1832 288.500v5.500M1827 294h7M1830.500 294v4" fill="none" stroke="#3a3a30" stroke-width="1.1" />
<path d="M1842.500 288.500l8 8M1850.500 288.500l-8 8" fill="none" stroke="#5b5b4a" stroke-width="1.4" />
<rect x="1507" y="303.5" width="348" height="24.5" fill="#ffffff" shape-rendering="crispEdges"/>
<text transform="translate(1519.7 318.8) scale(1 1.114)" font-size="11.67" fill="#1c1c26" textLength="322" lengthAdjust="spacing">TwinCAT.Connectivity.TcOpcUaSrv.Ctrls.Controls.DataAccess.Pr</text>
<path d="M1847.800 314h5.600l-2.800 3.300z" fill="#1b1b1b" />
<rect x="1507" y="328" width="348" height="23.5" fill="#cfd6e5" shape-rendering="crispEdges"/>
<rect x="1510.5" y="328.5" width="21.5" height="21" fill="#fcf8ef" stroke="#5f7096" stroke-width="1" shape-rendering="crispEdges"/>
<rect x="1514.5" y="334" width="4" height="4" fill="#1b1b1b"/>
<rect x="1515.5" y="335.5" width="2" height="1" fill="#fff"/>
<rect x="1516" y="335" width="1" height="2" fill="#fff"/>
<path d="M1520.500 334.5h6.500M1520.500 337h7.500" fill="none" stroke="#1b1b1b" stroke-width="1" />
<rect x="1514.5" y="343" width="4" height="4" fill="#1b1b1b"/>
<rect x="1515.5" y="344.5" width="2" height="1" fill="#fff"/>
<rect x="1516" y="344" width="1" height="2" fill="#fff"/>
<path d="M1520.500 343.5h6.500M1520.500 346h7.500" fill="none" stroke="#1b1b1b" stroke-width="1" />
<path d="M1522.500 340.500h5.500" fill="none" stroke="#1b1b1b" stroke-width="1" />
<rect x="1537" y="333" width="6" height="6" fill="#444"/>
<text x="1540" y="338.3" font-size="6" fill="#fff" font-weight="bold" text-anchor="middle">A</text>
<text x="1537" y="347.5" font-size="8" fill="#1b1b1b" font-weight="bold">Z</text>
<path d="M1547.500 334v10M1544.500 341l3 3.500 3-3.500" fill="none" stroke="#0b5cad" stroke-width="1.7" />
<rect x="1558" y="331" width="1" height="17" fill="#a5aec2" shape-rendering="crispEdges"/>
<path d="M1565.90 345.10L1572.20 338.80" stroke="#a9aeb8" stroke-width="2.80" stroke-linecap="round" fill="none"/>
<circle cx="1574.30" cy="336.70" r="4.20" fill="#a9aeb8"/>
<rect x="-1.54" y="-5.46" width="3.08" height="5.46" fill="#cfd6e5" transform="translate(1574.80 336.20) rotate(45)"/>
<rect x="1507" y="351" width="348" height="586" fill="#ffffff" shape-rendering="crispEdges"/>
<rect x="1507" y="351" width="348" height="3" fill="#eeeef2" shape-rendering="crispEdges"/>
<rect x="1507" y="353.1" width="14" height="459.75" fill="#eeeef2" shape-rendering="crispEdges"/>
<rect x="1507" y="353.1" width="348" height="18.39" fill="#eeeef2"/>
<rect x="1510.5" y="358" width="8" height="8" fill="#ffffff" stroke="#4a4a4a" stroke-width="1" shape-rendering="crispEdges"/>
<rect x="1512.5" y="361.5" width="4" height="1" fill="#1b1b1b" shape-rendering="crispEdges"/>
<text transform="translate(1526.3 366.5) scale(1 1.154)" font-size="11.27" fill="#111111" textLength="132" lengthAdjust="spacing" font-weight="bold">Data Access Device Type</text>
<g clip-path="url(#cname)">
<text transform="translate(1526 384.9) scale(1 1.127)" font-size="11.53" fill="#1c1c26" textLength="45.2" lengthAdjust="spacing">ADS port</text>
</g>
<text transform="translate(1661.5 384.9) scale(1 1.08)" font-size="12.04" fill="#111111" textLength="19.7" lengthAdjust="spacing" font-weight="bold">851</text>
<rect x="1521.6" y="389.4" width="334" height="1" fill="#eeeef2"/>
<rect x="1657.5" y="371.5" width="1" height="18.39" fill="#eeeef2"/>
<g clip-path="url(#cname)">
<text transform="translate(1526 403.3) scale(1 1.126)" font-size="11.55" fill="#1c1c26" textLength="92.4" lengthAdjust="spacing">ADS time suspend</text>
</g>
<text transform="translate(1661.5 403.3) scale(1 1.052)" font-size="12.36" fill="#111111" textLength="33.7" lengthAdjust="spacing" font-weight="bold">20000</text>
<rect x="1521.6" y="407.8" width="334" height="1" fill="#eeeef2"/>
<rect x="1657.5" y="389.9" width="1" height="18.39" fill="#eeeef2"/>
<g clip-path="url(#cname)">
<text transform="translate(1526 421.7) scale(1 1.096)" font-size="11.86" fill="#1c1c26" textLength="64.3" lengthAdjust="spacing">ADS timeout</text>
</g>
<text transform="translate(1661.5 421.7) scale(1 1.05)" font-size="12.38" fill="#111111" textLength="27" lengthAdjust="spacing" font-weight="bold">2000</text>
<rect x="1521.6" y="426.2" width="334" height="1" fill="#eeeef2"/>
<rect x="1657.5" y="408.3" width="1" height="18.39" fill="#eeeef2"/>
<rect x="1521.6" y="426.7" width="136" height="18.39" fill="#0a6cce"/>
<text transform="translate(1526 440.1) scale(1 1.129)" font-size="11.51" fill="#ffffff" textLength="58.7" lengthAdjust="spacing">AMS Net ID</text>
<text transform="translate(1661.5 440.1) scale(1 1.081)" font-size="12.03" fill="#111111" textLength="88.5" lengthAdjust="spacing" font-weight="bold">5.82.104.190.1.1</text>
<rect x="1521.6" y="444.6" width="334" height="1" fill="#eeeef2"/>
<rect x="1657.5" y="426.7" width="1" height="18.39" fill="#eeeef2"/>
<g clip-path="url(#cname)">
<text transform="translate(1526 458.4) scale(1 1.116)" font-size="11.65" fill="#1c1c26" textLength="65.7" lengthAdjust="spacing">Device name</text>
</g>
<text transform="translate(1661.5 458.4) scale(1 1.19)" font-size="10.92" fill="#111111" textLength="25.5" lengthAdjust="spacing" font-weight="bold">PLC1</text>
<rect x="1521.6" y="462.9" width="334" height="1" fill="#eeeef2"/>
<rect x="1657.5" y="445.1" width="1" height="18.39" fill="#eeeef2"/>
<g clip-path="url(#cname)">
<text transform="translate(1526 476.8) scale(1 1.118)" font-size="11.63" fill="#1c1c26" textLength="58.7" lengthAdjust="spacing">Device type</text>
</g>
<text transform="translate(1661.5 476.8) scale(1 1.152)" font-size="11.28" fill="#111111" textLength="164.8" lengthAdjust="spacing" font-weight="bold">TwinCAT 3 PLC (TMC) - Filtered</text>
<rect x="1521.6" y="481.3" width="334" height="1" fill="#eeeef2"/>
<rect x="1657.5" y="463.4" width="1" height="18.39" fill="#eeeef2"/>
<g clip-path="url(#cname)">
<text transform="translate(1526 495.2) scale(1 1.136)" font-size="11.44" fill="#1c1c26" textLength="43" lengthAdjust="spacing">Disabled</text>
</g>
<text transform="translate(1661.5 495.2) scale(1 1.19)" font-size="10.92" fill="#111111" textLength="26" lengthAdjust="spacing" font-weight="bold">False</text>
<rect x="1521.6" y="499.7" width="334" height="1" fill="#eeeef2"/>
<rect x="1657.5" y="481.8" width="1" height="18.39" fill="#eeeef2"/>
<g clip-path="url(#cname)">
<text transform="translate(1526 513.6) scale(1 1.078)" font-size="12.06" fill="#1c1c26" textLength="57" lengthAdjust="spacing">Symbol file</text>
</g>
<text transform="translate(1661.5 513.6) scale(1 1.091)" font-size="11.92" fill="#111111" textLength="148" lengthAdjust="spacing" font-weight="bold">[BootDir]/Plc/Port_851.tmc</text>
<rect x="1521.6" y="518.1" width="334" height="1" fill="#eeeef2"/>
<rect x="1657.5" y="500.2" width="1" height="18.39" fill="#eeeef2"/>
<rect x="1507" y="518.6" width="348" height="18.39" fill="#eeeef2"/>
<rect x="1510.5" y="524" width="8" height="8" fill="#ffffff" stroke="#4a4a4a" stroke-width="1" shape-rendering="crispEdges"/>
<rect x="1512.5" y="527.5" width="4" height="1" fill="#1b1b1b" shape-rendering="crispEdges"/>
<text transform="translate(1526.3 532.0) scale(1 1.144)" font-size="11.36" fill="#111111" textLength="145" lengthAdjust="spacing" font-weight="bold">Data Access DI Component</text>
<g clip-path="url(#cname)">
<text transform="translate(1526 550.4) scale(1 1.098)" font-size="11.84" fill="#1c1c26" textLength="72.5" lengthAdjust="spacing">DeviceManual</text>
</g>
<rect x="1521.6" y="554.9" width="334" height="1" fill="#eeeef2"/>
<rect x="1657.5" y="537.0" width="1" height="18.39" fill="#eeeef2"/>
<g clip-path="url(#cname)">
<text transform="translate(1526 568.8) scale(1 1.139)" font-size="11.41" fill="#1c1c26" textLength="76" lengthAdjust="spacing">DeviceRevision</text>
</g>
<rect x="1521.6" y="573.3" width="334" height="1" fill="#eeeef2"/>
<rect x="1657.5" y="555.4" width="1" height="18.39" fill="#eeeef2"/>
<g clip-path="url(#cname)">
<text transform="translate(1526 587.2) scale(1 1.122)" font-size="11.59" fill="#1c1c26" textLength="91.5" lengthAdjust="spacing">HardwareRevision</text>
</g>
<rect x="1521.6" y="591.7" width="334" height="1" fill="#eeeef2"/>
<rect x="1657.5" y="573.8" width="1" height="18.39" fill="#eeeef2"/>
<g clip-path="url(#cname)">
<text transform="translate(1526 605.6) scale(1 1.065)" font-size="12.21" fill="#1c1c26" textLength="69.5" lengthAdjust="spacing">Manufacturer</text>
</g>
<text transform="translate(1661.5 605.6) scale(1 1.117)" font-size="11.64" fill="#111111" textLength="74.2" lengthAdjust="spacing" font-weight="bold">beckhoff.com</text>
<rect x="1521.6" y="610.1" width="334" height="1" fill="#eeeef2"/>
<rect x="1657.5" y="592.2" width="1" height="18.39" fill="#eeeef2"/>
<g clip-path="url(#cname)">
<text transform="translate(1526 624.0) scale(1 1.059)" font-size="12.28" fill="#1c1c26" textLength="32.3" lengthAdjust="spacing">Model</text>
</g>
<text transform="translate(1661.5 624.0) scale(1 1.165)" font-size="11.16" fill="#111111" textLength="92.4" lengthAdjust="spacing" font-weight="bold">PC-based Control</text>
<rect x="1521.6" y="628.5" width="334" height="1" fill="#eeeef2"/>
<rect x="1657.5" y="610.6" width="1" height="18.39" fill="#eeeef2"/>
<g clip-path="url(#cname)">
<text transform="translate(1526 642.4) scale(1 1.103)" font-size="11.79" fill="#1c1c26" textLength="84.2" lengthAdjust="spacing">RevisionCounter</text>
</g>
<rect x="1521.6" y="646.8" width="334" height="1" fill="#eeeef2"/>
<rect x="1657.5" y="629.0" width="1" height="18.39" fill="#eeeef2"/>
<g clip-path="url(#cname)">
<text transform="translate(1526 660.7) scale(1 1.097)" font-size="11.85" fill="#1c1c26" textLength="70" lengthAdjust="spacing">SerialNumber</text>
</g>
<rect x="1521.6" y="665.2" width="334" height="1" fill="#eeeef2"/>
<rect x="1657.5" y="647.3" width="1" height="18.39" fill="#eeeef2"/>
<g clip-path="url(#cname)">
<text transform="translate(1526 679.1) scale(1 1.129)" font-size="11.51" fill="#1c1c26" textLength="86.5" lengthAdjust="spacing">SoftwareRevision</text>
</g>
<rect x="1521.6" y="683.6" width="334" height="1" fill="#eeeef2"/>
<rect x="1657.5" y="665.7" width="1" height="18.39" fill="#eeeef2"/>
<rect x="1507" y="684.1" width="348" height="18.39" fill="#eeeef2"/>
<rect x="1510.5" y="689" width="8" height="8" fill="#ffffff" stroke="#4a4a4a" stroke-width="1" shape-rendering="crispEdges"/>
<rect x="1512.5" y="692.5" width="4" height="1" fill="#1b1b1b" shape-rendering="crispEdges"/>
<text transform="translate(1526.3 697.5) scale(1 1.111)" font-size="11.7" fill="#111111" textLength="69.5" lengthAdjust="spacing" font-weight="bold">Expert mode</text>
<g clip-path="url(#cname)">
<text transform="translate(1526 715.9) scale(1 1.108)" font-size="11.73" fill="#1c1c26" textLength="81.9" lengthAdjust="spacing">Array expansion</text>
</g>
<text transform="translate(1661.5 715.9) scale(1 1.19)" font-size="10.92" fill="#111111" textLength="26" lengthAdjust="spacing" font-weight="bold">False</text>
<rect x="1521.6" y="720.4" width="334" height="1" fill="#eeeef2"/>
<rect x="1657.5" y="702.5" width="1" height="18.39" fill="#eeeef2"/>
<g clip-path="url(#cname)">
<text transform="translate(1526 734.3) scale(1 1.111)" font-size="11.7" fill="#1c1c26" textLength="101.8" lengthAdjust="spacing">Force identifier case</text>
</g>
<text transform="translate(1661.5 734.3) scale(1 1.106)" font-size="11.75" fill="#111111" textLength="28.8" lengthAdjust="spacing" font-weight="bold">None</text>
<rect x="1521.6" y="738.8" width="334" height="1" fill="#eeeef2"/>
<rect x="1657.5" y="720.9" width="1" height="18.39" fill="#eeeef2"/>
<g clip-path="url(#cname)">
<text transform="translate(1526 752.7) scale(1 1.08)" font-size="12.04" fill="#1c1c26" textLength="44.6" lengthAdjust="spacing">IO mode</text>
</g>
<text transform="translate(1661.5 752.7) scale(1 1.145)" font-size="11.35" fill="#111111" textLength="51.3" lengthAdjust="spacing" font-weight="bold">ByHandle</text>
<rect x="1521.6" y="757.2" width="334" height="1" fill="#eeeef2"/>
<rect x="1657.5" y="739.3" width="1" height="18.39" fill="#eeeef2"/>
<g clip-path="url(#cname)">
<text transform="translate(1526 771.1) scale(1 1.07)" font-size="12.15" fill="#1c1c26" textLength="137" lengthAdjust="spacing">Maximum Items in AdsGet</text>
</g>
<text transform="translate(1661.5 771.1) scale(1 1.043)" font-size="12.47" fill="#111111" textLength="6.8" lengthAdjust="spacing" font-weight="bold">0</text>
<rect x="1521.6" y="775.6" width="334" height="1" fill="#eeeef2"/>
<rect x="1657.5" y="757.7" width="1" height="18.39" fill="#eeeef2"/>
<g clip-path="url(#cname)">
<text transform="translate(1526 789.5) scale(1 1.114)" font-size="11.67" fill="#1c1c26" textLength="131" lengthAdjust="spacing">Namespace name version</text>
</g>
<text transform="translate(1661.5 789.5) scale(1 1.043)" font-size="12.47" fill="#111111" textLength="6.8" lengthAdjust="spacing" font-weight="bold">2</text>
<rect x="1521.6" y="794.0" width="334" height="1" fill="#eeeef2"/>
<rect x="1657.5" y="776.1" width="1" height="18.39" fill="#eeeef2"/>
<g clip-path="url(#cname)">
<text transform="translate(1526 807.9) scale(1 1.111)" font-size="11.7" fill="#1c1c26" textLength="147" lengthAdjust="spacing">Release ADS variable handle</text>
</g>
<text transform="translate(1661.5 807.9) scale(1 1.19)" font-size="10.92" fill="#111111" textLength="26" lengthAdjust="spacing" font-weight="bold">False</text>
<rect x="1521.6" y="812.4" width="334" height="1" fill="#eeeef2"/>
<rect x="1657.5" y="794.5" width="1" height="18.39" fill="#eeeef2"/>
<rect x="1711" y="428.5" width="1" height="15" fill="#000" shape-rendering="crispEdges"/>
<rect x="1841.5" y="427.5" width="13.5" height="17" fill="#f0f0f0" stroke="#adadad" stroke-width="1" shape-rendering="crispEdges"/>
<text x="1848.5" y="440" font-size="9" fill="#333" text-anchor="middle">...</text>
<rect x="1507" y="937" width="348" height="61.7" fill="#ffffff" shape-rendering="crispEdges"/>
<rect x="1507" y="937" width="348" height="1" fill="#e8e8ee" shape-rendering="crispEdges"/>
<text transform="translate(1513 955.2) scale(1 1.075)" font-size="12.09" fill="#111" textLength="63.9" lengthAdjust="spacing" font-weight="bold">AMS Net ID</text>
<text transform="translate(1513 972.9) scale(1 1.099)" font-size="11.83" fill="#1c1c26" textLength="141.7" lengthAdjust="spacing">AMS Net ID of target device</text>
<rect x="1507" y="998.7" width="61.5" height="19.3" fill="#ffffff"/>
<rect x="1568.5" y="998.7" width="53" height="19.3" fill="#3d5277"/>
<text transform="translate(1512.2 1011.4) scale(1 1.118)" font-size="11.63" fill="#1c1c26" textLength="51.2" lengthAdjust="spacing">Properties</text>
<text transform="translate(1575.4 1012) scale(1 1.099)" font-size="11.83" fill="#ffffff" textLength="39.4" lengthAdjust="spacing">Toolbox</text>
<rect x="1507" y="1024.6" width="348" height="20.4" fill="#4d6082"/>
<text transform="translate(1511.3 1039.5) scale(1 1.129)" font-size="11.51" fill="#ffffff" textLength="74.8" lengthAdjust="spacing">Target Browser</text>
<path d="M1811.500 1034h6.500l-3.250 3.500z" fill="#dfe4ee" />
<path d="M1828 1031.500h5M1829 1031.500v5.500M1832 1031.500v5.500M1827 1037h7M1830.500 1037v4" fill="none" stroke="#dfe4ee" stroke-width="1.1" />
<path d="M1842.500 1031.500l8 8M1850.500 1031.500l-8 8" fill="none" stroke="#dfe4ee" stroke-width="1.4" />
<rect x="1507" y="1045" width="348" height="76" fill="#f6f8fd" shape-rendering="crispEdges"/>
<rect x="1509.5" y="1047.5" width="44.5" height="18.5" fill="#ffe8a6" shape-rendering="crispEdges"/>
<text transform="translate(1521.2 1060.6) scale(1 1.19)" font-size="10.92" fill="#1c1c26" textLength="21.3" lengthAdjust="spacing">ADS</text>
<rect x="1554" y="1047.5" width="59.5" height="18.5" fill="#ecf1fa" shape-rendering="crispEdges"/>
<text transform="translate(1567.6 1060.6) scale(1 1.129)" font-size="11.51" fill="#1c1c26" textLength="34.6" lengthAdjust="spacing">OpcUa</text>
<rect x="1508" y="1066" width="289.5" height="55" fill="#d6dbe9" stroke="#9aa5c0" stroke-width="1" shape-rendering="crispEdges"/>
<rect x="1513.5" y="1072" width="280" height="25.5" fill="#fbfcfe" rx="3"/>
<rect x="1516.5" y="1075.0" width="1.3" height="1.8" fill="#444"/>
<rect x="1516.5" y="1079.2" width="1.3" height="1.8" fill="#444"/>
<rect x="1516.5" y="1083.4" width="1.3" height="1.8" fill="#444"/>
<rect x="1516.5" y="1087.6" width="1.3" height="1.8" fill="#444"/>
<rect x="1516.5" y="1091.8" width="1.3" height="1.8" fill="#444"/>
<rect x="1526.5" y="1078.5" width="4" height="3" fill="none" stroke="#333" stroke-width="1"/>
<path d="M1528.500 1081.500v2.500M1523.500 1086.500v-2.500h10v2.500M1528.500 1084v2.500" fill="none" stroke="#333" stroke-width="1" />
<rect x="1522" y="1086.5" width="3" height="3" fill="none" stroke="#333" stroke-width="0.9"/>
<rect x="1527" y="1086.5" width="3" height="3" fill="none" stroke="#333" stroke-width="0.9"/>
<rect x="1532" y="1086.5" width="3" height="3" fill="none" stroke="#333" stroke-width="0.9"/>
<rect x="1539" y="1077" width="1" height="16" fill="#9aa2b2" shape-rendering="crispEdges"/>
<circle cx="1547.7" cy="1084.5" r="4.2" fill="none" stroke="#333" stroke-width="2.2"/>
<path d="M1545 1079l3.500 1-1 3.500zM1550.500 1090l-3.500-1 1-3.500z" fill="#333" />
<rect x="1556.5" y="1077" width="1" height="16" fill="#9aa2b2" shape-rendering="crispEdges"/>
<path d="M1560.55 1088.95L1565.27 1084.23" stroke="#333" stroke-width="2.10" stroke-linecap="round" fill="none"/>
<circle cx="1566.85" cy="1082.65" r="3.15" fill="#333"/>
<rect x="-1.16" y="-4.09" width="2.31" height="4.09" fill="#fbfcfe" transform="translate(1567.23 1082.27) rotate(45)"/>
<rect x="1786" y="1089" width="5" height="1.2" fill="#555"/>
<path d="M1786 1092h5l-2.500 2.800z" fill="#555" />
<rect x="1510.5" y="1098.5" width="284" height="23" fill="#ffffff" stroke="#7a8aa8" stroke-width="1" shape-rendering="crispEdges"/>
<path d="M1521.500 1106.500l3.500 3.500-3.500 3.500z" fill="#fff" stroke="#8a8a8a" stroke-width="1" />
<rect x="1532.5" y="1103.5" width="13" height="9" fill="#2f9a1f" stroke="#1f6f12" stroke-width="0.8"/>
<rect x="1537.5" y="1112.5" width="3" height="2" fill="#3a3a3a"/>
<rect x="1535" y="1114.5" width="8" height="1.5" fill="#3a3a3a"/>
<text transform="translate(1552 1114) scale(1 1.19)" font-size="10.92" fill="#1c1c26" textLength="51" lengthAdjust="spacing">IWFPC439</text>
<rect x="1802.5" y="1051.5" width="12.5" height="12" fill="#ffffff" stroke="#333" stroke-width="1" shape-rendering="crispEdges"/>
<path d="M1805 1057.500l2.800 3 5-6.500" fill="none" stroke="#1b1b1b" stroke-width="1.5" />
<text transform="translate(1820.7 1060.6) scale(1 1.19)" font-size="10.92" fill="#1c1c26" textLength="33" lengthAdjust="spacing">Case S</text>
<rect x="1804.5" y="1090" width="51" height="20.7" fill="#eef2fa" shape-rendering="crispEdges"/>
<text transform="translate(1808.3 1105.6) scale(1 1.092)" font-size="11.91" fill="#1c1c26" textLength="30.7" lengthAdjust="spacing">Name</text>
</g>
<path d="M1855 245.500H1480.500V883.500H1855" fill="none" stroke="#d2152e" stroke-width="1" />
</svg>
</body></html>
